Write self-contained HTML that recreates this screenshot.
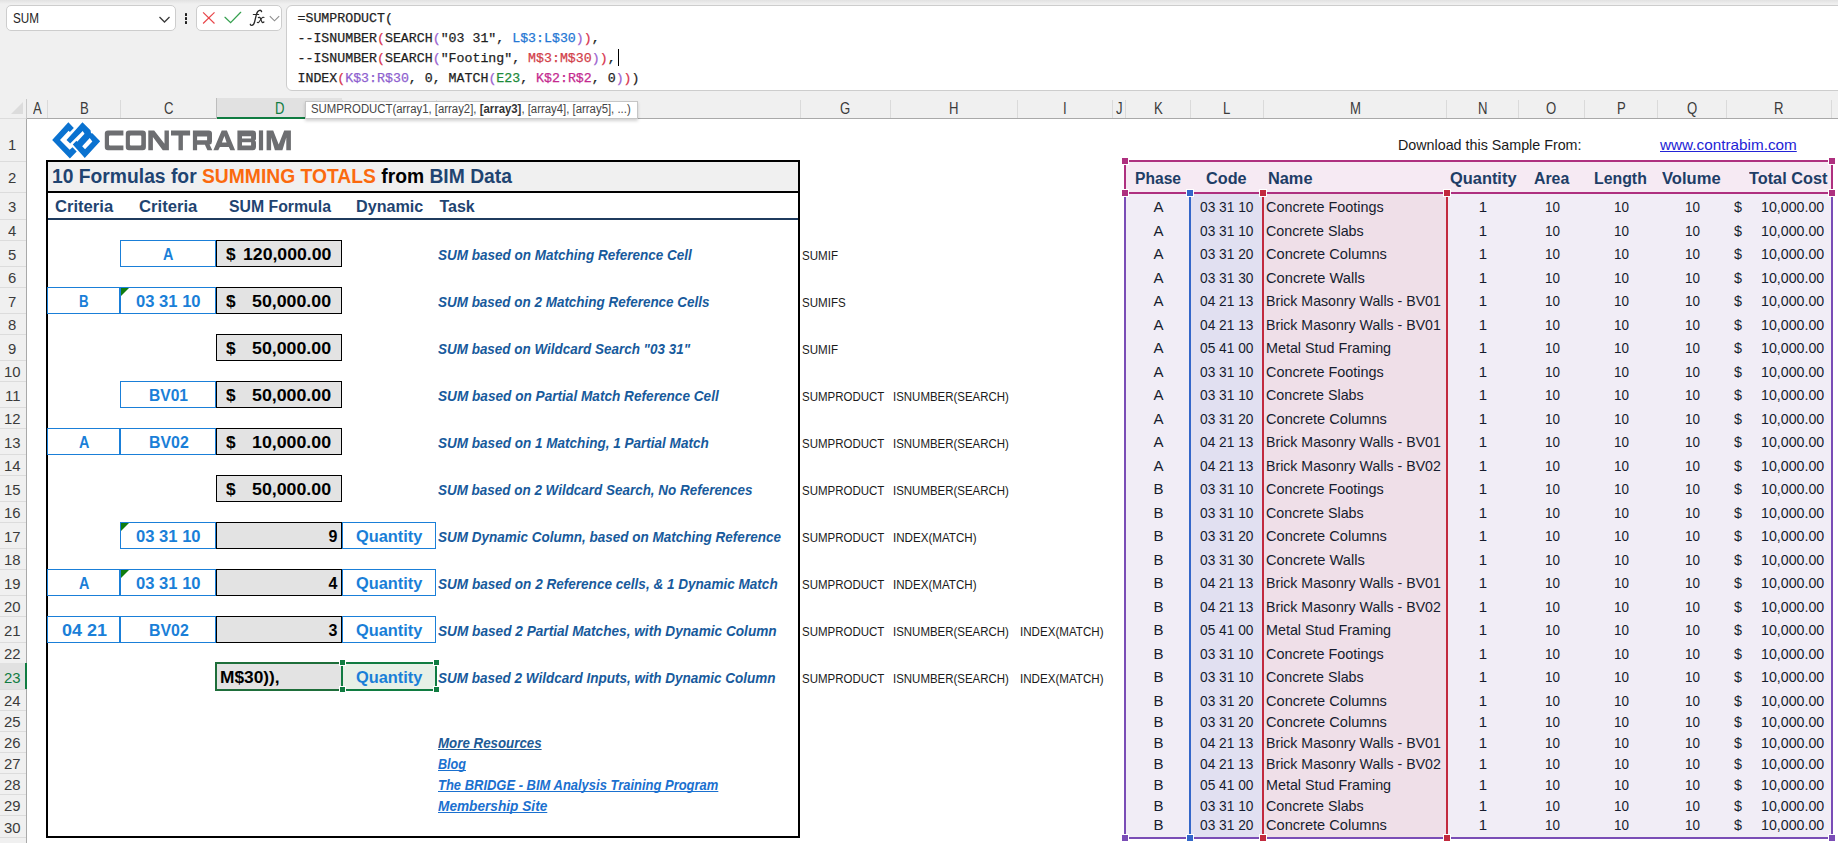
<!DOCTYPE html>
<html><head><meta charset="utf-8"><style>
html,body{margin:0;padding:0}
body{width:1838px;height:843px;overflow:hidden;position:relative;background:#fff;font-family:"Liberation Sans",sans-serif}
.t{position:absolute;white-space:nowrap;line-height:0}
</style></head><body>
<div style="position:absolute;left:0px;top:0px;width:1838px;height:96px;background:#f0f0f0"></div>
<div style="position:absolute;left:0px;top:0px;width:1838px;height:4px;background:linear-gradient(#e2e2e2,#f0f0f0)"></div>
<div style="position:absolute;left:6px;top:5px;width:170px;height:26px;box-sizing:border-box;background:#fff;border:1px solid #cdcdcd;border-radius:5px"></div>
<div class="t" style="left:13.00px;top:10.00px;font:normal normal 14px 'Liberation Sans', sans-serif;color:#1f1f1f;transform:scale(0.8360,1.0000);transform-origin:0 0;">SUM</div>
<svg style="position:absolute;left:158px;top:15px" width="13" height="9" viewBox="0 0 13 9"><path d="M1.5 2 L6.5 7 L11.5 2" fill="none" stroke="#3a3a3a" stroke-width="1.3"/></svg>
<div style="position:absolute;left:184.8px;top:13.3px;width:2.6px;height:2.6px;background:#1f1f1f;border-radius:0.6px"></div>
<div style="position:absolute;left:184.8px;top:17.3px;width:2.6px;height:2.6px;background:#1f1f1f;border-radius:0.6px"></div>
<div style="position:absolute;left:184.8px;top:21.3px;width:2.6px;height:2.6px;background:#1f1f1f;border-radius:0.6px"></div>
<div style="position:absolute;left:196px;top:5px;width:86px;height:26px;box-sizing:border-box;background:#fff;border:1px solid #cdcdcd;border-radius:5px"></div>
<svg style="position:absolute;left:200px;top:9px" width="20" height="18" viewBox="0 0 20 18"><path d="M3.1 3.4 L14.5 14.5 M14.5 3.4 L3.1 14.5" stroke="#e8464a" stroke-width="1.2" fill="none"/></svg>
<svg style="position:absolute;left:222px;top:9px" width="22" height="18" viewBox="0 0 22 18"><path d="M3 8.3 L8.6 13.6 L18.7 3.3" stroke="#36a04f" stroke-width="1.25" fill="none" stroke-linecap="round"/></svg>
<svg style="position:absolute;left:240px;top:5px" width="45" height="25" viewBox="240 5 45 25"><g fill="none" stroke="#2a2a2a" stroke-linecap="round">
<path d="M261.6,11.6 Q261.2,10.1 259.6,10.3 Q257.5,10.6 256.5,14.2 L254.6,21.8 Q253.8,25.2 251.6,25.4 Q250.2,25.4 250.4,24.3" stroke-width="1.35"/>
<path d="M253.3,14.5 L258.7,14.5" stroke-width="1.1"/>
<path d="M258.4,17.6 Q259.7,16.7 260.5,18.6 L261.7,21.6 Q262.5,23.4 263.9,22" stroke-width="1.2"/>
<path d="M264,17.5 Q263,16.6 261.6,18.3 L259.2,21.7 Q258.2,23.2 257.3,22.4" stroke-width="1.1"/>
</g><path d="M269.8,16.2 L274.5,20.8 L279.2,16.2" fill="none" stroke="#8c8c8c" stroke-width="1.1"/></svg>
<div style="position:absolute;left:286px;top:5px;width:1600px;height:86px;box-sizing:border-box;background:#fff;border:1px solid #cdcdcd;border-radius:6px"></div>
<div class="t" style="left:297.5px;top:11.00px;font:normal normal 13.25px 'Liberation Mono',monospace;color:#1f1f1f;-webkit-text-stroke:0.25px currentColor"><span style="color:#1f1f1f">=SUMPRODUCT</span><span style="color:#1f1f1f">(</span></div>
<div class="t" style="left:297.5px;top:31.00px;font:normal normal 13.25px 'Liberation Mono',monospace;color:#1f1f1f;-webkit-text-stroke:0.25px currentColor"><span style="color:#1f1f1f">--ISNUMBER</span><span style="color:#d8344f">(</span><span style="color:#1f1f1f">SEARCH</span><span style="color:#9b62cf">(</span><span style="color:#1f1f1f">&quot;03 31&quot;, </span><span style="color:#2577d4">L$3:L$30</span><span style="color:#9b62cf">)</span><span style="color:#d8344f">)</span><span style="color:#1f1f1f">,</span></div>
<div class="t" style="left:297.5px;top:51.00px;font:normal normal 13.25px 'Liberation Mono',monospace;color:#1f1f1f;-webkit-text-stroke:0.25px currentColor"><span style="color:#1f1f1f">--ISNUMBER</span><span style="color:#d8344f">(</span><span style="color:#1f1f1f">SEARCH</span><span style="color:#9b62cf">(</span><span style="color:#1f1f1f">&quot;Footing&quot;, </span><span style="color:#d2414a">M$3:M$30</span><span style="color:#9b62cf">)</span><span style="color:#d8344f">)</span><span style="color:#1f1f1f">,</span></div>
<div class="t" style="left:297.5px;top:71.00px;font:normal normal 13.25px 'Liberation Mono',monospace;color:#1f1f1f;-webkit-text-stroke:0.25px currentColor"><span style="color:#1f1f1f">INDEX</span><span style="color:#d8344f">(</span><span style="color:#8e5fcf">K$3:R$30</span><span style="color:#1f1f1f">, 0, </span><span style="color:#1f1f1f">MATCH</span><span style="color:#9b62cf">(</span><span style="color:#1d8a3a">E23</span><span style="color:#1f1f1f">, </span><span style="color:#c4298f">K$2:R$2</span><span style="color:#1f1f1f">, 0</span><span style="color:#9b62cf">)</span><span style="color:#d8344f">)</span><span style="color:#1f1f1f">)</span></div>
<div style="position:absolute;left:618px;top:49px;width:1px;height:17px;background:#000"></div>
<div style="position:absolute;left:0px;top:96px;width:1838px;height:23px;background:#f0f0f0"></div>
<div style="position:absolute;left:26px;top:118px;width:1812px;height:1px;background:#a9a9a9"></div>
<div style="position:absolute;left:0px;top:118px;width:26px;height:1px;background:#dcdcdc"></div>
<svg style="position:absolute;left:10px;top:101px" width="14" height="14" viewBox="0 0 14 14"><path d="M13 1 L13 13 L1 13 Z" fill="#dcdcdc"/></svg>
<div style="position:absolute;left:26px;top:99px;width:1px;height:20px;background:#c8c8c8"></div>
<div style="position:absolute;left:47px;top:100px;width:1px;height:18px;background:#dadada"></div>
<div style="position:absolute;left:120px;top:100px;width:1px;height:18px;background:#dadada"></div>
<div style="position:absolute;left:216px;top:100px;width:1px;height:18px;background:#dadada"></div>
<div style="position:absolute;left:216px;top:98px;width:126px;height:21px;background:#e1e1e1"></div>
<div style="position:absolute;left:216px;top:117px;width:126px;height:2px;background:#107c41"></div>
<div style="position:absolute;left:342px;top:100px;width:1px;height:18px;background:#dadada"></div>
<div style="position:absolute;left:436px;top:100px;width:1px;height:18px;background:#dadada"></div>
<div style="position:absolute;left:800px;top:100px;width:1px;height:18px;background:#dadada"></div>
<div style="position:absolute;left:890px;top:100px;width:1px;height:18px;background:#dadada"></div>
<div style="position:absolute;left:1017px;top:100px;width:1px;height:18px;background:#dadada"></div>
<div style="position:absolute;left:1112px;top:100px;width:1px;height:18px;background:#dadada"></div>
<div style="position:absolute;left:1125px;top:100px;width:1px;height:18px;background:#dadada"></div>
<div style="position:absolute;left:1190px;top:100px;width:1px;height:18px;background:#dadada"></div>
<div style="position:absolute;left:1263px;top:100px;width:1px;height:18px;background:#dadada"></div>
<div style="position:absolute;left:1446px;top:100px;width:1px;height:18px;background:#dadada"></div>
<div style="position:absolute;left:1518px;top:100px;width:1px;height:18px;background:#dadada"></div>
<div style="position:absolute;left:1584px;top:100px;width:1px;height:18px;background:#dadada"></div>
<div style="position:absolute;left:1657px;top:100px;width:1px;height:18px;background:#dadada"></div>
<div style="position:absolute;left:1726px;top:100px;width:1px;height:18px;background:#dadada"></div>
<div style="position:absolute;left:1831px;top:100px;width:1px;height:18px;background:#dadada"></div>
<div style="position:absolute;left:1900px;top:100px;width:1px;height:18px;background:#dadada"></div>
<div class="t" style="left:32.63px;top:100.00px;font:normal normal 16px 'Liberation Sans', sans-serif;color:#3b3b3b;transform:scale(0.8200,1.0000);transform-origin:0 0;">A</div>
<div class="t" style="left:79.63px;top:100.00px;font:normal normal 16px 'Liberation Sans', sans-serif;color:#3b3b3b;transform:scale(0.8200,1.0000);transform-origin:0 0;">B</div>
<div class="t" style="left:163.76px;top:100.00px;font:normal normal 16px 'Liberation Sans', sans-serif;color:#3b3b3b;transform:scale(0.8200,1.0000);transform-origin:0 0;">C</div>
<div class="t" style="left:274.76px;top:100.00px;font:normal normal 16px 'Liberation Sans', sans-serif;color:#107c41;transform:scale(0.8200,1.0000);transform-origin:0 0;">D</div>
<div class="t" style="left:385.13px;top:100.00px;font:normal normal 16px 'Liberation Sans', sans-serif;color:#3b3b3b;transform:scale(0.8200,1.0000);transform-origin:0 0;">E</div>
<div class="t" style="left:614.50px;top:100.00px;font:normal normal 16px 'Liberation Sans', sans-serif;color:#3b3b3b;transform:scale(0.8200,1.0000);transform-origin:0 0;">F</div>
<div class="t" style="left:840.40px;top:100.00px;font:normal normal 16px 'Liberation Sans', sans-serif;color:#3b3b3b;transform:scale(0.8200,1.0000);transform-origin:0 0;">G</div>
<div class="t" style="left:949.26px;top:100.00px;font:normal normal 16px 'Liberation Sans', sans-serif;color:#3b3b3b;transform:scale(0.8200,1.0000);transform-origin:0 0;">H</div>
<div class="t" style="left:1063.18px;top:100.00px;font:normal normal 16px 'Liberation Sans', sans-serif;color:#3b3b3b;transform:scale(0.8200,1.0000);transform-origin:0 0;">I</div>
<div class="t" style="left:1115.72px;top:100.00px;font:normal normal 16px 'Liberation Sans', sans-serif;color:#3b3b3b;transform:scale(0.8200,1.0000);transform-origin:0 0;">J</div>
<div class="t" style="left:1153.63px;top:100.00px;font:normal normal 16px 'Liberation Sans', sans-serif;color:#3b3b3b;transform:scale(0.8200,1.0000);transform-origin:0 0;">K</div>
<div class="t" style="left:1223.35px;top:100.00px;font:normal normal 16px 'Liberation Sans', sans-serif;color:#3b3b3b;transform:scale(0.8200,1.0000);transform-origin:0 0;">L</div>
<div class="t" style="left:1349.53px;top:100.00px;font:normal normal 16px 'Liberation Sans', sans-serif;color:#3b3b3b;transform:scale(0.8200,1.0000);transform-origin:0 0;">M</div>
<div class="t" style="left:1477.76px;top:100.00px;font:normal normal 16px 'Liberation Sans', sans-serif;color:#3b3b3b;transform:scale(0.8200,1.0000);transform-origin:0 0;">N</div>
<div class="t" style="left:1546.40px;top:100.00px;font:normal normal 16px 'Liberation Sans', sans-serif;color:#3b3b3b;transform:scale(0.8200,1.0000);transform-origin:0 0;">O</div>
<div class="t" style="left:1616.63px;top:100.00px;font:normal normal 16px 'Liberation Sans', sans-serif;color:#3b3b3b;transform:scale(0.8200,1.0000);transform-origin:0 0;">P</div>
<div class="t" style="left:1686.90px;top:100.00px;font:normal normal 16px 'Liberation Sans', sans-serif;color:#3b3b3b;transform:scale(0.8200,1.0000);transform-origin:0 0;">Q</div>
<div class="t" style="left:1774.26px;top:100.00px;font:normal normal 16px 'Liberation Sans', sans-serif;color:#3b3b3b;transform:scale(0.8200,1.0000);transform-origin:0 0;">R</div>
<div style="position:absolute;left:216px;top:98px;width:1px;height:21px;background:#bdbdbd"></div>
<div style="position:absolute;left:0px;top:119px;width:26px;height:724px;background:#f0f0f0"></div>
<div style="position:absolute;left:26px;top:119px;width:1px;height:724px;background:#a9a9a9"></div>
<div style="position:absolute;left:0px;top:161px;width:26px;height:1px;background:#dcdcdc"></div>
<div style="position:absolute;left:0px;top:192px;width:26px;height:1px;background:#dcdcdc"></div>
<div style="position:absolute;left:0px;top:219px;width:26px;height:1px;background:#dcdcdc"></div>
<div style="position:absolute;left:0px;top:240px;width:26px;height:1px;background:#dcdcdc"></div>
<div style="position:absolute;left:0px;top:266px;width:26px;height:1px;background:#dcdcdc"></div>
<div style="position:absolute;left:0px;top:287px;width:26px;height:1px;background:#dcdcdc"></div>
<div style="position:absolute;left:0px;top:313px;width:26px;height:1px;background:#dcdcdc"></div>
<div style="position:absolute;left:0px;top:334px;width:26px;height:1px;background:#dcdcdc"></div>
<div style="position:absolute;left:0px;top:360px;width:26px;height:1px;background:#dcdcdc"></div>
<div style="position:absolute;left:0px;top:381px;width:26px;height:1px;background:#dcdcdc"></div>
<div style="position:absolute;left:0px;top:407px;width:26px;height:1px;background:#dcdcdc"></div>
<div style="position:absolute;left:0px;top:428px;width:26px;height:1px;background:#dcdcdc"></div>
<div style="position:absolute;left:0px;top:454px;width:26px;height:1px;background:#dcdcdc"></div>
<div style="position:absolute;left:0px;top:475px;width:26px;height:1px;background:#dcdcdc"></div>
<div style="position:absolute;left:0px;top:501px;width:26px;height:1px;background:#dcdcdc"></div>
<div style="position:absolute;left:0px;top:522px;width:26px;height:1px;background:#dcdcdc"></div>
<div style="position:absolute;left:0px;top:548px;width:26px;height:1px;background:#dcdcdc"></div>
<div style="position:absolute;left:0px;top:569px;width:26px;height:1px;background:#dcdcdc"></div>
<div style="position:absolute;left:0px;top:595px;width:26px;height:1px;background:#dcdcdc"></div>
<div style="position:absolute;left:0px;top:616px;width:26px;height:1px;background:#dcdcdc"></div>
<div style="position:absolute;left:0px;top:642px;width:26px;height:1px;background:#dcdcdc"></div>
<div style="position:absolute;left:0px;top:663px;width:26px;height:1px;background:#dcdcdc"></div>
<div style="position:absolute;left:0px;top:689px;width:26px;height:1px;background:#dcdcdc"></div>
<div style="position:absolute;left:0px;top:710px;width:26px;height:1px;background:#dcdcdc"></div>
<div style="position:absolute;left:0px;top:731px;width:26px;height:1px;background:#dcdcdc"></div>
<div style="position:absolute;left:0px;top:752px;width:26px;height:1px;background:#dcdcdc"></div>
<div style="position:absolute;left:0px;top:773px;width:26px;height:1px;background:#dcdcdc"></div>
<div style="position:absolute;left:0px;top:794px;width:26px;height:1px;background:#dcdcdc"></div>
<div style="position:absolute;left:0px;top:815px;width:26px;height:1px;background:#dcdcdc"></div>
<div style="position:absolute;left:0px;top:837px;width:26px;height:1px;background:#dcdcdc"></div>
<div style="position:absolute;left:0px;top:860px;width:26px;height:1px;background:#dcdcdc"></div>
<div style="position:absolute;left:0px;top:663px;width:26px;height:26px;background:#e1e1e1"></div>
<div style="position:absolute;left:25px;top:663px;width:2px;height:26px;background:#107c41"></div>
<div class="t" style="left:8.16px;top:137.00px;font:normal normal 16px 'Liberation Sans', sans-serif;color:#3b3b3b;transform:scale(0.9300,0.9200);transform-origin:0 0;">1</div>
<div class="t" style="left:8.16px;top:170.00px;font:normal normal 16px 'Liberation Sans', sans-serif;color:#3b3b3b;transform:scale(0.9300,0.9200);transform-origin:0 0;">2</div>
<div class="t" style="left:8.16px;top:199.00px;font:normal normal 16px 'Liberation Sans', sans-serif;color:#3b3b3b;transform:scale(0.9300,0.9200);transform-origin:0 0;">3</div>
<div class="t" style="left:8.16px;top:223.00px;font:normal normal 16px 'Liberation Sans', sans-serif;color:#3b3b3b;transform:scale(0.9300,0.9200);transform-origin:0 0;">4</div>
<div class="t" style="left:8.16px;top:247.00px;font:normal normal 16px 'Liberation Sans', sans-serif;color:#3b3b3b;transform:scale(0.9300,0.9200);transform-origin:0 0;">5</div>
<div class="t" style="left:8.16px;top:270.00px;font:normal normal 16px 'Liberation Sans', sans-serif;color:#3b3b3b;transform:scale(0.9300,0.9200);transform-origin:0 0;">6</div>
<div class="t" style="left:8.16px;top:294.00px;font:normal normal 16px 'Liberation Sans', sans-serif;color:#3b3b3b;transform:scale(0.9300,0.9200);transform-origin:0 0;">7</div>
<div class="t" style="left:8.16px;top:317.00px;font:normal normal 16px 'Liberation Sans', sans-serif;color:#3b3b3b;transform:scale(0.9300,0.9200);transform-origin:0 0;">8</div>
<div class="t" style="left:8.16px;top:341.00px;font:normal normal 16px 'Liberation Sans', sans-serif;color:#3b3b3b;transform:scale(0.9300,0.9200);transform-origin:0 0;">9</div>
<div class="t" style="left:4.02px;top:364.00px;font:normal normal 16px 'Liberation Sans', sans-serif;color:#3b3b3b;transform:scale(0.9300,0.9200);transform-origin:0 0;">10</div>
<div class="t" style="left:4.58px;top:388.00px;font:normal normal 16px 'Liberation Sans', sans-serif;color:#3b3b3b;transform:scale(0.9300,0.9200);transform-origin:0 0;">11</div>
<div class="t" style="left:4.02px;top:411.00px;font:normal normal 16px 'Liberation Sans', sans-serif;color:#3b3b3b;transform:scale(0.9300,0.9200);transform-origin:0 0;">12</div>
<div class="t" style="left:4.02px;top:435.00px;font:normal normal 16px 'Liberation Sans', sans-serif;color:#3b3b3b;transform:scale(0.9300,0.9200);transform-origin:0 0;">13</div>
<div class="t" style="left:4.02px;top:458.00px;font:normal normal 16px 'Liberation Sans', sans-serif;color:#3b3b3b;transform:scale(0.9300,0.9200);transform-origin:0 0;">14</div>
<div class="t" style="left:4.02px;top:482.00px;font:normal normal 16px 'Liberation Sans', sans-serif;color:#3b3b3b;transform:scale(0.9300,0.9200);transform-origin:0 0;">15</div>
<div class="t" style="left:4.02px;top:505.00px;font:normal normal 16px 'Liberation Sans', sans-serif;color:#3b3b3b;transform:scale(0.9300,0.9200);transform-origin:0 0;">16</div>
<div class="t" style="left:4.02px;top:529.00px;font:normal normal 16px 'Liberation Sans', sans-serif;color:#3b3b3b;transform:scale(0.9300,0.9200);transform-origin:0 0;">17</div>
<div class="t" style="left:4.02px;top:552.00px;font:normal normal 16px 'Liberation Sans', sans-serif;color:#3b3b3b;transform:scale(0.9300,0.9200);transform-origin:0 0;">18</div>
<div class="t" style="left:4.02px;top:576.00px;font:normal normal 16px 'Liberation Sans', sans-serif;color:#3b3b3b;transform:scale(0.9300,0.9200);transform-origin:0 0;">19</div>
<div class="t" style="left:4.02px;top:599.00px;font:normal normal 16px 'Liberation Sans', sans-serif;color:#3b3b3b;transform:scale(0.9300,0.9200);transform-origin:0 0;">20</div>
<div class="t" style="left:4.02px;top:623.00px;font:normal normal 16px 'Liberation Sans', sans-serif;color:#3b3b3b;transform:scale(0.9300,0.9200);transform-origin:0 0;">21</div>
<div class="t" style="left:4.02px;top:646.00px;font:normal normal 16px 'Liberation Sans', sans-serif;color:#3b3b3b;transform:scale(0.9300,0.9200);transform-origin:0 0;">22</div>
<div class="t" style="left:4.02px;top:670.00px;font:normal normal 16px 'Liberation Sans', sans-serif;color:#107c41;transform:scale(0.9300,0.9200);transform-origin:0 0;">23</div>
<div class="t" style="left:4.02px;top:693.00px;font:normal normal 16px 'Liberation Sans', sans-serif;color:#3b3b3b;transform:scale(0.9300,0.9200);transform-origin:0 0;">24</div>
<div class="t" style="left:4.02px;top:714.00px;font:normal normal 16px 'Liberation Sans', sans-serif;color:#3b3b3b;transform:scale(0.9300,0.9200);transform-origin:0 0;">25</div>
<div class="t" style="left:4.02px;top:735.00px;font:normal normal 16px 'Liberation Sans', sans-serif;color:#3b3b3b;transform:scale(0.9300,0.9200);transform-origin:0 0;">26</div>
<div class="t" style="left:4.02px;top:756.00px;font:normal normal 16px 'Liberation Sans', sans-serif;color:#3b3b3b;transform:scale(0.9300,0.9200);transform-origin:0 0;">27</div>
<div class="t" style="left:4.02px;top:777.00px;font:normal normal 16px 'Liberation Sans', sans-serif;color:#3b3b3b;transform:scale(0.9300,0.9200);transform-origin:0 0;">28</div>
<div class="t" style="left:4.02px;top:798.00px;font:normal normal 16px 'Liberation Sans', sans-serif;color:#3b3b3b;transform:scale(0.9300,0.9200);transform-origin:0 0;">29</div>
<div class="t" style="left:4.02px;top:820.00px;font:normal normal 16px 'Liberation Sans', sans-serif;color:#3b3b3b;transform:scale(0.9300,0.9200);transform-origin:0 0;">30</div>
<div style="position:absolute;left:27px;top:119px;width:1811px;height:724px;background:#fff"></div>
<svg style="position:absolute;left:48px;top:118px" width="60" height="44" viewBox="0 0 1150 843"><g fill="#0a72d0">
<path d="M80,420 L390,80 L495,190 L420,268 L395,245 L230,420 L415,610 L470,560 L550,640 L420,775 Z"/>
<path fill-rule="evenodd" d="M660,80 L815,235 L825,290 L850,290 L1000,445 L705,765 L475,510 L545,435 L560,455 L700,300 L665,250 L425,490 L355,420 Z M800,385 L850,450 L710,600 L655,540 Z"/>
</g></svg>
<svg style="position:absolute;left:0;top:0" width="300" height="160" viewBox="0 0 300 160"><g fill="#6d6e71" fill-rule="evenodd">
<path d="M123.4,130.4 L108,130.4 Q104.8,130.4 104.8,133.6 L104.8,147.1 Q104.8,150.3 108,150.3 L123.4,150.3 L123.4,145.4 L110,145.4 Q109,145.4 109,144.4 L109,136.6 Q109,135.6 110,135.6 L123.4,135.6 Z"/>
<path d="M129,130.4 L142.7,130.4 Q145.9,130.4 145.9,133.6 L145.9,147.1 Q145.9,150.3 142.7,150.3 L129,150.3 Q125.8,150.3 125.8,147.1 L125.8,133.6 Q125.8,130.4 129,130.4 Z M130.9,135.6 L140.3,135.6 Q141.3,135.6 141.3,136.6 L141.3,144.4 Q141.3,145.4 140.3,145.4 L130.9,145.4 Q129.9,145.4 129.9,144.4 L129.9,136.6 Q129.9,135.6 130.9,135.6 Z"/>
<path d="M148.3,150.3 L148.3,130.4 L154.2,130.4 L164.5,143.8 L164.5,130.4 L168.9,130.4 L168.9,150.3 L162.8,150.3 L152.9,137.1 L152.9,150.3 Z"/>
<path d="M171,130.4 L190.1,130.4 L190.1,135.6 L182.9,135.6 L182.9,150.3 L178.5,150.3 L178.5,135.6 L171,135.6 Z"/>
<path d="M192.9,150.3 L192.9,130.4 L208.8,130.4 Q212,130.4 212,133.6 L212,141.4 Q212,144.2 209.6,144.6 L212.3,150.3 L207.4,150.3 L204.9,144.8 L197.1,144.8 L197.1,150.3 Z M197.1,136.4 L207.1,136.4 L207.1,140.2 L197.1,140.2 Z"/>
<path d="M213.4,150.3 L221.7,130.4 L226.9,130.4 L235.1,150.3 L230.3,150.3 L228.8,146.9 L219.9,146.9 L218.3,150.3 Z M224.4,136 L226.6,142.6 L221.9,142.6 Z"/>
<path d="M237.4,130.4 L252.8,130.4 Q256,130.4 256,133.6 L256,138.5 Q256,140.3 254.8,140.6 Q256,141 256,142.8 L256,147.1 Q256,150.3 252.8,150.3 L237.4,150.3 Z M242,136.2 L251.1,136.2 L251.1,138.4 L242,138.4 Z M242,142.3 L251.1,142.3 L251.1,145.6 L242,145.6 Z"/>
<path d="M258.9,130.4 L263.1,130.4 L263.1,150.3 L258.9,150.3 Z"/>
<path d="M266.6,150.3 L266.6,130.4 L273.2,130.4 L278.7,144.6 L284.2,130.4 L290.9,130.4 L290.9,150.3 L286.3,150.3 L286.3,137.4 L282.4,150.3 L274.9,150.3 L271.1,137.4 L271.1,150.3 Z"/>
</g></svg>
<div style="position:absolute;left:46px;top:160px;width:754px;height:678px;box-sizing:border-box;border:2px solid #000"></div>
<div style="position:absolute;left:48px;top:162px;width:750px;height:29px;background:#f0f0f0"></div>
<div style="position:absolute;left:48px;top:191px;width:750px;height:2px;background:#000"></div>
<div style="position:absolute;left:48px;top:218px;width:750px;height:2px;background:#1f3b5e"></div>
<div class="t" style="left:52.00px;top:165.00px;font:normal bold 20px 'Liberation Sans', sans-serif;color:#1f4471;transform:scale(0.9640,1.0000);transform-origin:0 0;"><span style="color:#1f4471">10 Formulas for </span><span style="color:#fb6a0e">SUMMING TOTALS</span><span style="color:#000"> from </span><span style="color:#1f4471">BIM Data</span></div>
<div class="t" style="left:55.30px;top:198.00px;font:normal bold 16px 'Liberation Sans', sans-serif;color:#1f4471;transform:scale(1.0383,1.0000);transform-origin:0 0;">Criteria</div>
<div class="t" style="left:139.40px;top:198.00px;font:normal bold 16px 'Liberation Sans', sans-serif;color:#1f4471;transform:scale(1.0419,1.0000);transform-origin:0 0;">Criteria</div>
<div class="t" style="left:228.60px;top:198.00px;font:normal bold 16px 'Liberation Sans', sans-serif;color:#1f4471;transform:scale(0.9884,1.0000);transform-origin:0 0;">SUM Formula</div>
<div class="t" style="left:355.70px;top:198.00px;font:normal bold 16px 'Liberation Sans', sans-serif;color:#1f4471;transform:scale(1.0090,1.0000);transform-origin:0 0;">Dynamic</div>
<div class="t" style="left:439.40px;top:198.00px;font:normal bold 16px 'Liberation Sans', sans-serif;color:#1f4471;">Task</div>
<div style="position:absolute;left:120px;top:240px;width:96px;height:27px;box-sizing:border-box;border:1px solid #1a7fd8"></div>
<div style="position:absolute;left:216px;top:240px;width:126px;height:27px;box-sizing:border-box;background:#e3e3e3;border:1px solid #000"></div>
<div class="t" style="left:163.30px;top:246.00px;font:normal bold 16px 'Liberation Sans', sans-serif;color:#1a7fd8;transform:scale(0.9004,1.0000);transform-origin:0 0;">A</div>
<div class="t" style="left:226.40px;top:246.00px;font:normal bold 16px 'Liberation Sans', sans-serif;color:#000;transform:scale(1.0787,1.0000);transform-origin:0 0;">$</div>
<div class="t" style="left:243.00px;top:246.00px;font:normal bold 16px 'Liberation Sans', sans-serif;color:#000;transform:scale(1.1036,1.0000);transform-origin:0 0;">120,000.00</div>
<div class="t" style="left:438.30px;top:247.00px;font:italic bold 16px 'Liberation Sans', sans-serif;color:#175a9c;transform:scale(0.8444,0.9500);transform-origin:0 0;">SUM based on Matching Reference Cell</div>
<div class="t" style="left:802.00px;top:249.00px;font:normal normal 12px 'Liberation Sans', sans-serif;color:#1a1a1a;transform:scale(0.9650,1.0000);transform-origin:0 0;">SUMIF</div>
<div style="position:absolute;left:47px;top:287px;width:73px;height:27px;box-sizing:border-box;border:1px solid #1a7fd8"></div>
<div style="position:absolute;left:120px;top:287px;width:96px;height:27px;box-sizing:border-box;border:1px solid #1a7fd8"></div>
<div style="position:absolute;left:216px;top:287px;width:126px;height:27px;box-sizing:border-box;background:#e3e3e3;border:1px solid #000"></div>
<svg style="position:absolute;left:121px;top:288px" width="9" height="9" viewBox="0 0 9 9"><path d="M0 0 L8 0 L0 8 Z" fill="#107c10"/></svg>
<div class="t" style="left:79.20px;top:293.00px;font:normal bold 16px 'Liberation Sans', sans-serif;color:#1a7fd8;transform:scale(0.8312,1.0000);transform-origin:0 0;">B</div>
<div class="t" style="left:136.20px;top:293.00px;font:normal bold 16px 'Liberation Sans', sans-serif;color:#1a7fd8;transform:scale(1.0369,1.0000);transform-origin:0 0;">03 31 10</div>
<div class="t" style="left:226.40px;top:293.00px;font:normal bold 16px 'Liberation Sans', sans-serif;color:#000;transform:scale(1.0787,1.0000);transform-origin:0 0;">$</div>
<div class="t" style="left:252.30px;top:293.00px;font:normal bold 16px 'Liberation Sans', sans-serif;color:#000;transform:scale(1.1110,1.0000);transform-origin:0 0;">50,000.00</div>
<div class="t" style="left:438.30px;top:294.00px;font:italic bold 16px 'Liberation Sans', sans-serif;color:#175a9c;transform:scale(0.8412,0.9500);transform-origin:0 0;">SUM based on 2 Matching Reference Cells</div>
<div class="t" style="left:802.00px;top:296.00px;font:normal normal 12px 'Liberation Sans', sans-serif;color:#1a1a1a;transform:scale(0.9650,1.0000);transform-origin:0 0;">SUMIFS</div>
<div style="position:absolute;left:216px;top:334px;width:126px;height:27px;box-sizing:border-box;background:#e3e3e3;border:1px solid #000"></div>
<div class="t" style="left:226.40px;top:340.00px;font:normal bold 16px 'Liberation Sans', sans-serif;color:#000;transform:scale(1.0787,1.0000);transform-origin:0 0;">$</div>
<div class="t" style="left:252.30px;top:340.00px;font:normal bold 16px 'Liberation Sans', sans-serif;color:#000;transform:scale(1.1110,1.0000);transform-origin:0 0;">50,000.00</div>
<div class="t" style="left:438.30px;top:341.00px;font:italic bold 16px 'Liberation Sans', sans-serif;color:#175a9c;transform:scale(0.8414,0.9500);transform-origin:0 0;">SUM based on Wildcard Search &quot;03 31&quot;</div>
<div class="t" style="left:802.00px;top:343.00px;font:normal normal 12px 'Liberation Sans', sans-serif;color:#1a1a1a;transform:scale(0.9650,1.0000);transform-origin:0 0;">SUMIF</div>
<div style="position:absolute;left:120px;top:381px;width:96px;height:27px;box-sizing:border-box;border:1px solid #1a7fd8"></div>
<div style="position:absolute;left:216px;top:381px;width:126px;height:27px;box-sizing:border-box;background:#e3e3e3;border:1px solid #000"></div>
<div class="t" style="left:149.00px;top:387.00px;font:normal bold 16px 'Liberation Sans', sans-serif;color:#1a7fd8;transform:scale(0.9750,1.0000);transform-origin:0 0;">BV01</div>
<div class="t" style="left:226.40px;top:387.00px;font:normal bold 16px 'Liberation Sans', sans-serif;color:#000;transform:scale(1.0787,1.0000);transform-origin:0 0;">$</div>
<div class="t" style="left:252.30px;top:387.00px;font:normal bold 16px 'Liberation Sans', sans-serif;color:#000;transform:scale(1.1110,1.0000);transform-origin:0 0;">50,000.00</div>
<div class="t" style="left:438.30px;top:388.00px;font:italic bold 16px 'Liberation Sans', sans-serif;color:#175a9c;transform:scale(0.8510,0.9500);transform-origin:0 0;">SUM based on Partial Match Reference Cell</div>
<div class="t" style="left:802.00px;top:390.00px;font:normal normal 12px 'Liberation Sans', sans-serif;color:#1a1a1a;transform:scale(0.9581,1.0000);transform-origin:0 0;">SUMPRODUCT</div>
<div class="t" style="left:893.10px;top:390.00px;font:normal normal 12px 'Liberation Sans', sans-serif;color:#1a1a1a;transform:scale(0.9551,1.0000);transform-origin:0 0;">ISNUMBER(SEARCH)</div>
<div style="position:absolute;left:47px;top:428px;width:73px;height:27px;box-sizing:border-box;border:1px solid #1a7fd8"></div>
<div style="position:absolute;left:120px;top:428px;width:96px;height:27px;box-sizing:border-box;border:1px solid #1a7fd8"></div>
<div style="position:absolute;left:216px;top:428px;width:126px;height:27px;box-sizing:border-box;background:#e3e3e3;border:1px solid #000"></div>
<div class="t" style="left:78.80px;top:434.00px;font:normal bold 16px 'Liberation Sans', sans-serif;color:#1a7fd8;transform:scale(0.9004,1.0000);transform-origin:0 0;">A</div>
<div class="t" style="left:148.65px;top:434.00px;font:normal bold 16px 'Liberation Sans', sans-serif;color:#1a7fd8;transform:scale(0.9925,1.0000);transform-origin:0 0;">BV02</div>
<div class="t" style="left:226.40px;top:434.00px;font:normal bold 16px 'Liberation Sans', sans-serif;color:#000;transform:scale(1.0787,1.0000);transform-origin:0 0;">$</div>
<div class="t" style="left:252.30px;top:434.00px;font:normal bold 16px 'Liberation Sans', sans-serif;color:#000;transform:scale(1.1110,1.0000);transform-origin:0 0;">10,000.00</div>
<div class="t" style="left:438.30px;top:435.00px;font:italic bold 16px 'Liberation Sans', sans-serif;color:#175a9c;transform:scale(0.8458,0.9500);transform-origin:0 0;">SUM based on 1 Matching, 1 Partial Match</div>
<div class="t" style="left:802.00px;top:437.00px;font:normal normal 12px 'Liberation Sans', sans-serif;color:#1a1a1a;transform:scale(0.9581,1.0000);transform-origin:0 0;">SUMPRODUCT</div>
<div class="t" style="left:893.10px;top:437.00px;font:normal normal 12px 'Liberation Sans', sans-serif;color:#1a1a1a;transform:scale(0.9551,1.0000);transform-origin:0 0;">ISNUMBER(SEARCH)</div>
<div style="position:absolute;left:216px;top:475px;width:126px;height:27px;box-sizing:border-box;background:#e3e3e3;border:1px solid #000"></div>
<div class="t" style="left:226.40px;top:481.00px;font:normal bold 16px 'Liberation Sans', sans-serif;color:#000;transform:scale(1.0787,1.0000);transform-origin:0 0;">$</div>
<div class="t" style="left:252.30px;top:481.00px;font:normal bold 16px 'Liberation Sans', sans-serif;color:#000;transform:scale(1.1110,1.0000);transform-origin:0 0;">50,000.00</div>
<div class="t" style="left:438.30px;top:482.00px;font:italic bold 16px 'Liberation Sans', sans-serif;color:#175a9c;transform:scale(0.8405,0.9500);transform-origin:0 0;">SUM based on 2 Wildcard Search, No References</div>
<div class="t" style="left:802.00px;top:484.00px;font:normal normal 12px 'Liberation Sans', sans-serif;color:#1a1a1a;transform:scale(0.9581,1.0000);transform-origin:0 0;">SUMPRODUCT</div>
<div class="t" style="left:893.10px;top:484.00px;font:normal normal 12px 'Liberation Sans', sans-serif;color:#1a1a1a;transform:scale(0.9551,1.0000);transform-origin:0 0;">ISNUMBER(SEARCH)</div>
<div style="position:absolute;left:120px;top:522px;width:96px;height:27px;box-sizing:border-box;border:1px solid #1a7fd8"></div>
<div style="position:absolute;left:342px;top:522px;width:94px;height:27px;box-sizing:border-box;border:1px solid #1a7fd8"></div>
<div style="position:absolute;left:216px;top:522px;width:126px;height:27px;box-sizing:border-box;background:#e3e3e3;border:1px solid #000"></div>
<svg style="position:absolute;left:121px;top:523px" width="9" height="9" viewBox="0 0 9 9"><path d="M0 0 L8 0 L0 8 Z" fill="#107c10"/></svg>
<div class="t" style="left:136.20px;top:528.00px;font:normal bold 16px 'Liberation Sans', sans-serif;color:#1a7fd8;transform:scale(1.0369,1.0000);transform-origin:0 0;">03 31 10</div>
<div class="t" style="left:328.40px;top:528.00px;font:normal bold 16px 'Liberation Sans', sans-serif;color:#000;">9</div>
<div class="t" style="left:356.10px;top:528.00px;font:normal bold 16px 'Liberation Sans', sans-serif;color:#1a7fd8;transform:scale(1.0231,1.0000);transform-origin:0 0;">Quantity</div>
<div class="t" style="left:438.30px;top:529.00px;font:italic bold 16px 'Liberation Sans', sans-serif;color:#175a9c;transform:scale(0.8440,0.9500);transform-origin:0 0;">SUM Dynamic Column, based on Matching Reference</div>
<div class="t" style="left:802.00px;top:531.00px;font:normal normal 12px 'Liberation Sans', sans-serif;color:#1a1a1a;transform:scale(0.9581,1.0000);transform-origin:0 0;">SUMPRODUCT</div>
<div class="t" style="left:893.10px;top:531.00px;font:normal normal 12px 'Liberation Sans', sans-serif;color:#1a1a1a;transform:scale(0.9670,1.0000);transform-origin:0 0;">INDEX(MATCH)</div>
<div style="position:absolute;left:47px;top:569px;width:73px;height:27px;box-sizing:border-box;border:1px solid #1a7fd8"></div>
<div style="position:absolute;left:120px;top:569px;width:96px;height:27px;box-sizing:border-box;border:1px solid #1a7fd8"></div>
<div style="position:absolute;left:342px;top:569px;width:94px;height:27px;box-sizing:border-box;border:1px solid #1a7fd8"></div>
<div style="position:absolute;left:216px;top:569px;width:126px;height:27px;box-sizing:border-box;background:#e3e3e3;border:1px solid #000"></div>
<svg style="position:absolute;left:121px;top:570px" width="9" height="9" viewBox="0 0 9 9"><path d="M0 0 L8 0 L0 8 Z" fill="#107c10"/></svg>
<div class="t" style="left:78.80px;top:575.00px;font:normal bold 16px 'Liberation Sans', sans-serif;color:#1a7fd8;transform:scale(0.9004,1.0000);transform-origin:0 0;">A</div>
<div class="t" style="left:136.20px;top:575.00px;font:normal bold 16px 'Liberation Sans', sans-serif;color:#1a7fd8;transform:scale(1.0369,1.0000);transform-origin:0 0;">03 31 10</div>
<div class="t" style="left:328.40px;top:575.00px;font:normal bold 16px 'Liberation Sans', sans-serif;color:#000;">4</div>
<div class="t" style="left:356.10px;top:575.00px;font:normal bold 16px 'Liberation Sans', sans-serif;color:#1a7fd8;transform:scale(1.0231,1.0000);transform-origin:0 0;">Quantity</div>
<div class="t" style="left:438.30px;top:576.00px;font:italic bold 16px 'Liberation Sans', sans-serif;color:#175a9c;transform:scale(0.8470,0.9500);transform-origin:0 0;">SUM based on 2 Reference cells, &amp; 1 Dynamic Match</div>
<div class="t" style="left:802.00px;top:578.00px;font:normal normal 12px 'Liberation Sans', sans-serif;color:#1a1a1a;transform:scale(0.9581,1.0000);transform-origin:0 0;">SUMPRODUCT</div>
<div class="t" style="left:893.10px;top:578.00px;font:normal normal 12px 'Liberation Sans', sans-serif;color:#1a1a1a;transform:scale(0.9670,1.0000);transform-origin:0 0;">INDEX(MATCH)</div>
<div style="position:absolute;left:47px;top:616px;width:73px;height:27px;box-sizing:border-box;border:1px solid #1a7fd8"></div>
<div style="position:absolute;left:120px;top:616px;width:96px;height:27px;box-sizing:border-box;border:1px solid #1a7fd8"></div>
<div style="position:absolute;left:342px;top:616px;width:94px;height:27px;box-sizing:border-box;border:1px solid #1a7fd8"></div>
<div style="position:absolute;left:216px;top:616px;width:126px;height:27px;box-sizing:border-box;background:#e3e3e3;border:1px solid #000"></div>
<div class="t" style="left:61.50px;top:622.00px;font:normal bold 16px 'Liberation Sans', sans-serif;color:#1a7fd8;transform:scale(1.1236,1.0000);transform-origin:0 0;">04 21</div>
<div class="t" style="left:148.65px;top:622.00px;font:normal bold 16px 'Liberation Sans', sans-serif;color:#1a7fd8;transform:scale(0.9925,1.0000);transform-origin:0 0;">BV02</div>
<div class="t" style="left:328.40px;top:622.00px;font:normal bold 16px 'Liberation Sans', sans-serif;color:#000;">3</div>
<div class="t" style="left:356.10px;top:622.00px;font:normal bold 16px 'Liberation Sans', sans-serif;color:#1a7fd8;transform:scale(1.0231,1.0000);transform-origin:0 0;">Quantity</div>
<div class="t" style="left:438.30px;top:623.00px;font:italic bold 16px 'Liberation Sans', sans-serif;color:#175a9c;transform:scale(0.8522,0.9500);transform-origin:0 0;">SUM based 2 Partial Matches, with Dynamic Column</div>
<div class="t" style="left:802.00px;top:625.00px;font:normal normal 12px 'Liberation Sans', sans-serif;color:#1a1a1a;transform:scale(0.9581,1.0000);transform-origin:0 0;">SUMPRODUCT</div>
<div class="t" style="left:893.10px;top:625.00px;font:normal normal 12px 'Liberation Sans', sans-serif;color:#1a1a1a;transform:scale(0.9551,1.0000);transform-origin:0 0;">ISNUMBER(SEARCH)</div>
<div class="t" style="left:1020.30px;top:625.00px;font:normal normal 12px 'Liberation Sans', sans-serif;color:#1a1a1a;transform:scale(0.9659,1.0000);transform-origin:0 0;">INDEX(MATCH)</div>
<div class="t" style="left:356.10px;top:669.00px;font:normal bold 16px 'Liberation Sans', sans-serif;color:#1a7fd8;transform:scale(1.0231,1.0000);transform-origin:0 0;">Quantity</div>
<div class="t" style="left:438.30px;top:670.00px;font:italic bold 16px 'Liberation Sans', sans-serif;color:#175a9c;transform:scale(0.8442,0.9500);transform-origin:0 0;">SUM based 2 Wildcard Inputs, with Dynamic Column</div>
<div class="t" style="left:802.00px;top:672.00px;font:normal normal 12px 'Liberation Sans', sans-serif;color:#1a1a1a;transform:scale(0.9581,1.0000);transform-origin:0 0;">SUMPRODUCT</div>
<div class="t" style="left:893.10px;top:672.00px;font:normal normal 12px 'Liberation Sans', sans-serif;color:#1a1a1a;transform:scale(0.9551,1.0000);transform-origin:0 0;">ISNUMBER(SEARCH)</div>
<div class="t" style="left:1020.30px;top:672.00px;font:normal normal 12px 'Liberation Sans', sans-serif;color:#1a1a1a;transform:scale(0.9659,1.0000);transform-origin:0 0;">INDEX(MATCH)</div>
<div style="position:absolute;left:215px;top:662px;width:128px;height:29px;box-sizing:border-box;background:#e3e3e3;border:2px solid #1e6e3a"></div>
<div class="t" style="left:220.40px;top:669.00px;font:normal bold 16px 'Liberation Sans', sans-serif;color:#000;transform:scale(1.0807,1.0000);transform-origin:0 0;">M$30)),</div>
<div style="position:absolute;left:341px;top:662px;width:96px;height:29px;box-sizing:border-box;background:#e7f0e7;border:2px solid #107c41"></div>
<div style="position:absolute;left:339.5px;top:660px;width:5px;height:5px;background:#107c41;outline:1px solid #fff"></div>
<div style="position:absolute;left:433.5px;top:660px;width:5px;height:5px;background:#107c41;outline:1px solid #fff"></div>
<div style="position:absolute;left:339.5px;top:686.5px;width:5px;height:5px;background:#107c41;outline:1px solid #fff"></div>
<div style="position:absolute;left:433.5px;top:686.5px;width:5px;height:5px;background:#107c41;outline:1px solid #fff"></div>
<div class="t" style="left:356.10px;top:669.00px;font:normal bold 16px 'Liberation Sans', sans-serif;color:#1a7fd8;transform:scale(1.0231,1.0000);transform-origin:0 0;">Quantity</div>
<div class="t" style="left:438.30px;top:734.00px;font:italic bold 15px 'Liberation Sans', sans-serif;color:#1d5a96;transform:scale(0.8877,1.0000);transform-origin:0 0;text-decoration:underline;text-decoration-skip-ink:none;">More Resources</div>
<div class="t" style="left:438.30px;top:755.00px;font:italic bold 15px 'Liberation Sans', sans-serif;color:#1a70cf;transform:scale(0.8396,1.0000);transform-origin:0 0;text-decoration:underline;text-decoration-skip-ink:none;">Blog</div>
<div class="t" style="left:438.30px;top:776.00px;font:italic bold 15px 'Liberation Sans', sans-serif;color:#1a70cf;transform:scale(0.8646,1.0000);transform-origin:0 0;text-decoration:underline;text-decoration-skip-ink:none;">The BRIDGE - BIM Analysis Training Program</div>
<div class="t" style="left:438.30px;top:797.00px;font:italic bold 15px 'Liberation Sans', sans-serif;color:#1a70cf;transform:scale(0.9105,1.0000);transform-origin:0 0;text-decoration:underline;text-decoration-skip-ink:none;">Membership Site</div>
<div class="t" style="left:1398.00px;top:136.00px;font:normal normal 15px 'Liberation Sans', sans-serif;color:#1a1a1a;transform:scale(0.9528,1.0000);transform-origin:0 0;">Download this Sample From:</div>
<div class="t" style="left:1660.05px;top:136.00px;font:normal normal 15px 'Liberation Sans', sans-serif;color:#2323d6;transform:scale(1.0190,1.0000);transform-origin:0 0;text-decoration:underline;text-decoration-skip-ink:none;">www.contrabim.com</div>
<div style="position:absolute;left:1126px;top:162px;width:705px;height:30px;background:#f6eaf3"></div>
<div style="position:absolute;left:1126px;top:194px;width:705px;height:643px;background:#f1edf6"></div>
<div style="position:absolute;left:1191px;top:194px;width:72px;height:643px;background:#e1e0f1"></div>
<div style="position:absolute;left:1264px;top:194px;width:182px;height:643px;background:#efdfe8"></div>
<div class="t" style="left:1135.00px;top:170.00px;font:normal bold 16px 'Liberation Sans', sans-serif;color:#203d66;transform:scale(0.9756,1.0000);transform-origin:0 0;">Phase</div>
<div class="t" style="left:1206.40px;top:170.00px;font:normal bold 16px 'Liberation Sans', sans-serif;color:#203d66;transform:scale(1.0150,1.0000);transform-origin:0 0;">Code</div>
<div class="t" style="left:1267.70px;top:170.00px;font:normal bold 16px 'Liberation Sans', sans-serif;color:#203d66;transform:scale(1.0206,1.0000);transform-origin:0 0;">Name</div>
<div class="t" style="left:1449.70px;top:170.00px;font:normal bold 16px 'Liberation Sans', sans-serif;color:#203d66;transform:scale(1.0247,1.0000);transform-origin:0 0;">Quantity</div>
<div class="t" style="left:1534.20px;top:170.00px;font:normal bold 16px 'Liberation Sans', sans-serif;color:#203d66;transform:scale(0.9888,1.0000);transform-origin:0 0;">Area</div>
<div class="t" style="left:1594.40px;top:170.00px;font:normal bold 16px 'Liberation Sans', sans-serif;color:#203d66;transform:scale(0.9906,1.0000);transform-origin:0 0;">Length</div>
<div class="t" style="left:1662.40px;top:170.00px;font:normal bold 16px 'Liberation Sans', sans-serif;color:#203d66;transform:scale(1.0353,1.0000);transform-origin:0 0;">Volume</div>
<div class="t" style="left:1749.20px;top:170.00px;font:normal bold 16px 'Liberation Sans', sans-serif;color:#203d66;transform:scale(1.0175,1.0000);transform-origin:0 0;">Total Cost</div>
<div class="t" style="left:1153.40px;top:198.00px;font:normal normal 15px 'Liberation Sans', sans-serif;color:#161c2e;">A</div>
<div class="t" style="left:1200.25px;top:198.00px;font:normal normal 15px 'Liberation Sans', sans-serif;color:#161c2e;transform:scale(0.9161,1.0000);transform-origin:0 0;">03 31 10</div>
<div class="t" style="left:1266.20px;top:198.00px;font:normal normal 15px 'Liberation Sans', sans-serif;color:#161c2e;transform:scale(0.9596,1.0000);transform-origin:0 0;">Concrete Footings</div>
<div class="t" style="left:1478.83px;top:198.00px;font:normal normal 15px 'Liberation Sans', sans-serif;color:#161c2e;">1</div>
<div class="t" style="left:1544.70px;top:198.00px;font:normal normal 15px 'Liberation Sans', sans-serif;color:#161c2e;transform:scale(0.8982,1.0000);transform-origin:0 0;">10</div>
<div class="t" style="left:1613.90px;top:198.00px;font:normal normal 15px 'Liberation Sans', sans-serif;color:#161c2e;transform:scale(0.8982,1.0000);transform-origin:0 0;">10</div>
<div class="t" style="left:1684.50px;top:198.00px;font:normal normal 15px 'Liberation Sans', sans-serif;color:#161c2e;transform:scale(0.8982,1.0000);transform-origin:0 0;">10</div>
<div class="t" style="left:1734.00px;top:198.00px;font:normal normal 15px 'Liberation Sans', sans-serif;color:#161c2e;transform:scale(0.9581,1.0000);transform-origin:0 0;">$</div>
<div class="t" style="left:1760.50px;top:198.00px;font:normal normal 15px 'Liberation Sans', sans-serif;color:#161c2e;transform:scale(0.9468,1.0000);transform-origin:0 0;">10,000.00</div>
<div class="t" style="left:1153.40px;top:222.00px;font:normal normal 15px 'Liberation Sans', sans-serif;color:#161c2e;">A</div>
<div class="t" style="left:1200.25px;top:222.00px;font:normal normal 15px 'Liberation Sans', sans-serif;color:#161c2e;transform:scale(0.9161,1.0000);transform-origin:0 0;">03 31 10</div>
<div class="t" style="left:1266.20px;top:222.00px;font:normal normal 15px 'Liberation Sans', sans-serif;color:#161c2e;transform:scale(0.9527,1.0000);transform-origin:0 0;">Concrete Slabs</div>
<div class="t" style="left:1478.83px;top:222.00px;font:normal normal 15px 'Liberation Sans', sans-serif;color:#161c2e;">1</div>
<div class="t" style="left:1544.70px;top:222.00px;font:normal normal 15px 'Liberation Sans', sans-serif;color:#161c2e;transform:scale(0.8982,1.0000);transform-origin:0 0;">10</div>
<div class="t" style="left:1613.90px;top:222.00px;font:normal normal 15px 'Liberation Sans', sans-serif;color:#161c2e;transform:scale(0.8982,1.0000);transform-origin:0 0;">10</div>
<div class="t" style="left:1684.50px;top:222.00px;font:normal normal 15px 'Liberation Sans', sans-serif;color:#161c2e;transform:scale(0.8982,1.0000);transform-origin:0 0;">10</div>
<div class="t" style="left:1734.00px;top:222.00px;font:normal normal 15px 'Liberation Sans', sans-serif;color:#161c2e;transform:scale(0.9581,1.0000);transform-origin:0 0;">$</div>
<div class="t" style="left:1760.50px;top:222.00px;font:normal normal 15px 'Liberation Sans', sans-serif;color:#161c2e;transform:scale(0.9468,1.0000);transform-origin:0 0;">10,000.00</div>
<div class="t" style="left:1153.40px;top:245.00px;font:normal normal 15px 'Liberation Sans', sans-serif;color:#161c2e;">A</div>
<div class="t" style="left:1200.25px;top:245.00px;font:normal normal 15px 'Liberation Sans', sans-serif;color:#161c2e;transform:scale(0.9161,1.0000);transform-origin:0 0;">03 31 20</div>
<div class="t" style="left:1266.20px;top:245.00px;font:normal normal 15px 'Liberation Sans', sans-serif;color:#161c2e;transform:scale(0.9734,1.0000);transform-origin:0 0;">Concrete Columns</div>
<div class="t" style="left:1478.83px;top:245.00px;font:normal normal 15px 'Liberation Sans', sans-serif;color:#161c2e;">1</div>
<div class="t" style="left:1544.70px;top:245.00px;font:normal normal 15px 'Liberation Sans', sans-serif;color:#161c2e;transform:scale(0.8982,1.0000);transform-origin:0 0;">10</div>
<div class="t" style="left:1613.90px;top:245.00px;font:normal normal 15px 'Liberation Sans', sans-serif;color:#161c2e;transform:scale(0.8982,1.0000);transform-origin:0 0;">10</div>
<div class="t" style="left:1684.50px;top:245.00px;font:normal normal 15px 'Liberation Sans', sans-serif;color:#161c2e;transform:scale(0.8982,1.0000);transform-origin:0 0;">10</div>
<div class="t" style="left:1734.00px;top:245.00px;font:normal normal 15px 'Liberation Sans', sans-serif;color:#161c2e;transform:scale(0.9581,1.0000);transform-origin:0 0;">$</div>
<div class="t" style="left:1760.50px;top:245.00px;font:normal normal 15px 'Liberation Sans', sans-serif;color:#161c2e;transform:scale(0.9468,1.0000);transform-origin:0 0;">10,000.00</div>
<div class="t" style="left:1153.40px;top:269.00px;font:normal normal 15px 'Liberation Sans', sans-serif;color:#161c2e;">A</div>
<div class="t" style="left:1200.25px;top:269.00px;font:normal normal 15px 'Liberation Sans', sans-serif;color:#161c2e;transform:scale(0.9161,1.0000);transform-origin:0 0;">03 31 30</div>
<div class="t" style="left:1266.20px;top:269.00px;font:normal normal 15px 'Liberation Sans', sans-serif;color:#161c2e;transform:scale(0.9768,1.0000);transform-origin:0 0;">Concrete Walls</div>
<div class="t" style="left:1478.83px;top:269.00px;font:normal normal 15px 'Liberation Sans', sans-serif;color:#161c2e;">1</div>
<div class="t" style="left:1544.70px;top:269.00px;font:normal normal 15px 'Liberation Sans', sans-serif;color:#161c2e;transform:scale(0.8982,1.0000);transform-origin:0 0;">10</div>
<div class="t" style="left:1613.90px;top:269.00px;font:normal normal 15px 'Liberation Sans', sans-serif;color:#161c2e;transform:scale(0.8982,1.0000);transform-origin:0 0;">10</div>
<div class="t" style="left:1684.50px;top:269.00px;font:normal normal 15px 'Liberation Sans', sans-serif;color:#161c2e;transform:scale(0.8982,1.0000);transform-origin:0 0;">10</div>
<div class="t" style="left:1734.00px;top:269.00px;font:normal normal 15px 'Liberation Sans', sans-serif;color:#161c2e;transform:scale(0.9581,1.0000);transform-origin:0 0;">$</div>
<div class="t" style="left:1760.50px;top:269.00px;font:normal normal 15px 'Liberation Sans', sans-serif;color:#161c2e;transform:scale(0.9468,1.0000);transform-origin:0 0;">10,000.00</div>
<div class="t" style="left:1153.40px;top:292.00px;font:normal normal 15px 'Liberation Sans', sans-serif;color:#161c2e;">A</div>
<div class="t" style="left:1200.25px;top:292.00px;font:normal normal 15px 'Liberation Sans', sans-serif;color:#161c2e;transform:scale(0.9161,1.0000);transform-origin:0 0;">04 21 13</div>
<div class="t" style="left:1266.20px;top:292.00px;font:normal normal 15px 'Liberation Sans', sans-serif;color:#161c2e;transform:scale(0.9433,1.0000);transform-origin:0 0;">Brick Masonry Walls - BV01</div>
<div class="t" style="left:1478.83px;top:292.00px;font:normal normal 15px 'Liberation Sans', sans-serif;color:#161c2e;">1</div>
<div class="t" style="left:1544.70px;top:292.00px;font:normal normal 15px 'Liberation Sans', sans-serif;color:#161c2e;transform:scale(0.8982,1.0000);transform-origin:0 0;">10</div>
<div class="t" style="left:1613.90px;top:292.00px;font:normal normal 15px 'Liberation Sans', sans-serif;color:#161c2e;transform:scale(0.8982,1.0000);transform-origin:0 0;">10</div>
<div class="t" style="left:1684.50px;top:292.00px;font:normal normal 15px 'Liberation Sans', sans-serif;color:#161c2e;transform:scale(0.8982,1.0000);transform-origin:0 0;">10</div>
<div class="t" style="left:1734.00px;top:292.00px;font:normal normal 15px 'Liberation Sans', sans-serif;color:#161c2e;transform:scale(0.9581,1.0000);transform-origin:0 0;">$</div>
<div class="t" style="left:1760.50px;top:292.00px;font:normal normal 15px 'Liberation Sans', sans-serif;color:#161c2e;transform:scale(0.9468,1.0000);transform-origin:0 0;">10,000.00</div>
<div class="t" style="left:1153.40px;top:316.00px;font:normal normal 15px 'Liberation Sans', sans-serif;color:#161c2e;">A</div>
<div class="t" style="left:1200.25px;top:316.00px;font:normal normal 15px 'Liberation Sans', sans-serif;color:#161c2e;transform:scale(0.9161,1.0000);transform-origin:0 0;">04 21 13</div>
<div class="t" style="left:1266.20px;top:316.00px;font:normal normal 15px 'Liberation Sans', sans-serif;color:#161c2e;transform:scale(0.9433,1.0000);transform-origin:0 0;">Brick Masonry Walls - BV01</div>
<div class="t" style="left:1478.83px;top:316.00px;font:normal normal 15px 'Liberation Sans', sans-serif;color:#161c2e;">1</div>
<div class="t" style="left:1544.70px;top:316.00px;font:normal normal 15px 'Liberation Sans', sans-serif;color:#161c2e;transform:scale(0.8982,1.0000);transform-origin:0 0;">10</div>
<div class="t" style="left:1613.90px;top:316.00px;font:normal normal 15px 'Liberation Sans', sans-serif;color:#161c2e;transform:scale(0.8982,1.0000);transform-origin:0 0;">10</div>
<div class="t" style="left:1684.50px;top:316.00px;font:normal normal 15px 'Liberation Sans', sans-serif;color:#161c2e;transform:scale(0.8982,1.0000);transform-origin:0 0;">10</div>
<div class="t" style="left:1734.00px;top:316.00px;font:normal normal 15px 'Liberation Sans', sans-serif;color:#161c2e;transform:scale(0.9581,1.0000);transform-origin:0 0;">$</div>
<div class="t" style="left:1760.50px;top:316.00px;font:normal normal 15px 'Liberation Sans', sans-serif;color:#161c2e;transform:scale(0.9468,1.0000);transform-origin:0 0;">10,000.00</div>
<div class="t" style="left:1153.40px;top:339.00px;font:normal normal 15px 'Liberation Sans', sans-serif;color:#161c2e;">A</div>
<div class="t" style="left:1200.25px;top:339.00px;font:normal normal 15px 'Liberation Sans', sans-serif;color:#161c2e;transform:scale(0.9161,1.0000);transform-origin:0 0;">05 41 00</div>
<div class="t" style="left:1266.20px;top:339.00px;font:normal normal 15px 'Liberation Sans', sans-serif;color:#161c2e;transform:scale(0.9557,1.0000);transform-origin:0 0;">Metal Stud Framing</div>
<div class="t" style="left:1478.83px;top:339.00px;font:normal normal 15px 'Liberation Sans', sans-serif;color:#161c2e;">1</div>
<div class="t" style="left:1544.70px;top:339.00px;font:normal normal 15px 'Liberation Sans', sans-serif;color:#161c2e;transform:scale(0.8982,1.0000);transform-origin:0 0;">10</div>
<div class="t" style="left:1613.90px;top:339.00px;font:normal normal 15px 'Liberation Sans', sans-serif;color:#161c2e;transform:scale(0.8982,1.0000);transform-origin:0 0;">10</div>
<div class="t" style="left:1684.50px;top:339.00px;font:normal normal 15px 'Liberation Sans', sans-serif;color:#161c2e;transform:scale(0.8982,1.0000);transform-origin:0 0;">10</div>
<div class="t" style="left:1734.00px;top:339.00px;font:normal normal 15px 'Liberation Sans', sans-serif;color:#161c2e;transform:scale(0.9581,1.0000);transform-origin:0 0;">$</div>
<div class="t" style="left:1760.50px;top:339.00px;font:normal normal 15px 'Liberation Sans', sans-serif;color:#161c2e;transform:scale(0.9468,1.0000);transform-origin:0 0;">10,000.00</div>
<div class="t" style="left:1153.40px;top:363.00px;font:normal normal 15px 'Liberation Sans', sans-serif;color:#161c2e;">A</div>
<div class="t" style="left:1200.25px;top:363.00px;font:normal normal 15px 'Liberation Sans', sans-serif;color:#161c2e;transform:scale(0.9161,1.0000);transform-origin:0 0;">03 31 10</div>
<div class="t" style="left:1266.20px;top:363.00px;font:normal normal 15px 'Liberation Sans', sans-serif;color:#161c2e;transform:scale(0.9596,1.0000);transform-origin:0 0;">Concrete Footings</div>
<div class="t" style="left:1478.83px;top:363.00px;font:normal normal 15px 'Liberation Sans', sans-serif;color:#161c2e;">1</div>
<div class="t" style="left:1544.70px;top:363.00px;font:normal normal 15px 'Liberation Sans', sans-serif;color:#161c2e;transform:scale(0.8982,1.0000);transform-origin:0 0;">10</div>
<div class="t" style="left:1613.90px;top:363.00px;font:normal normal 15px 'Liberation Sans', sans-serif;color:#161c2e;transform:scale(0.8982,1.0000);transform-origin:0 0;">10</div>
<div class="t" style="left:1684.50px;top:363.00px;font:normal normal 15px 'Liberation Sans', sans-serif;color:#161c2e;transform:scale(0.8982,1.0000);transform-origin:0 0;">10</div>
<div class="t" style="left:1734.00px;top:363.00px;font:normal normal 15px 'Liberation Sans', sans-serif;color:#161c2e;transform:scale(0.9581,1.0000);transform-origin:0 0;">$</div>
<div class="t" style="left:1760.50px;top:363.00px;font:normal normal 15px 'Liberation Sans', sans-serif;color:#161c2e;transform:scale(0.9468,1.0000);transform-origin:0 0;">10,000.00</div>
<div class="t" style="left:1153.40px;top:386.00px;font:normal normal 15px 'Liberation Sans', sans-serif;color:#161c2e;">A</div>
<div class="t" style="left:1200.25px;top:386.00px;font:normal normal 15px 'Liberation Sans', sans-serif;color:#161c2e;transform:scale(0.9161,1.0000);transform-origin:0 0;">03 31 10</div>
<div class="t" style="left:1266.20px;top:386.00px;font:normal normal 15px 'Liberation Sans', sans-serif;color:#161c2e;transform:scale(0.9527,1.0000);transform-origin:0 0;">Concrete Slabs</div>
<div class="t" style="left:1478.83px;top:386.00px;font:normal normal 15px 'Liberation Sans', sans-serif;color:#161c2e;">1</div>
<div class="t" style="left:1544.70px;top:386.00px;font:normal normal 15px 'Liberation Sans', sans-serif;color:#161c2e;transform:scale(0.8982,1.0000);transform-origin:0 0;">10</div>
<div class="t" style="left:1613.90px;top:386.00px;font:normal normal 15px 'Liberation Sans', sans-serif;color:#161c2e;transform:scale(0.8982,1.0000);transform-origin:0 0;">10</div>
<div class="t" style="left:1684.50px;top:386.00px;font:normal normal 15px 'Liberation Sans', sans-serif;color:#161c2e;transform:scale(0.8982,1.0000);transform-origin:0 0;">10</div>
<div class="t" style="left:1734.00px;top:386.00px;font:normal normal 15px 'Liberation Sans', sans-serif;color:#161c2e;transform:scale(0.9581,1.0000);transform-origin:0 0;">$</div>
<div class="t" style="left:1760.50px;top:386.00px;font:normal normal 15px 'Liberation Sans', sans-serif;color:#161c2e;transform:scale(0.9468,1.0000);transform-origin:0 0;">10,000.00</div>
<div class="t" style="left:1153.40px;top:410.00px;font:normal normal 15px 'Liberation Sans', sans-serif;color:#161c2e;">A</div>
<div class="t" style="left:1200.25px;top:410.00px;font:normal normal 15px 'Liberation Sans', sans-serif;color:#161c2e;transform:scale(0.9161,1.0000);transform-origin:0 0;">03 31 20</div>
<div class="t" style="left:1266.20px;top:410.00px;font:normal normal 15px 'Liberation Sans', sans-serif;color:#161c2e;transform:scale(0.9734,1.0000);transform-origin:0 0;">Concrete Columns</div>
<div class="t" style="left:1478.83px;top:410.00px;font:normal normal 15px 'Liberation Sans', sans-serif;color:#161c2e;">1</div>
<div class="t" style="left:1544.70px;top:410.00px;font:normal normal 15px 'Liberation Sans', sans-serif;color:#161c2e;transform:scale(0.8982,1.0000);transform-origin:0 0;">10</div>
<div class="t" style="left:1613.90px;top:410.00px;font:normal normal 15px 'Liberation Sans', sans-serif;color:#161c2e;transform:scale(0.8982,1.0000);transform-origin:0 0;">10</div>
<div class="t" style="left:1684.50px;top:410.00px;font:normal normal 15px 'Liberation Sans', sans-serif;color:#161c2e;transform:scale(0.8982,1.0000);transform-origin:0 0;">10</div>
<div class="t" style="left:1734.00px;top:410.00px;font:normal normal 15px 'Liberation Sans', sans-serif;color:#161c2e;transform:scale(0.9581,1.0000);transform-origin:0 0;">$</div>
<div class="t" style="left:1760.50px;top:410.00px;font:normal normal 15px 'Liberation Sans', sans-serif;color:#161c2e;transform:scale(0.9468,1.0000);transform-origin:0 0;">10,000.00</div>
<div class="t" style="left:1153.40px;top:433.00px;font:normal normal 15px 'Liberation Sans', sans-serif;color:#161c2e;">A</div>
<div class="t" style="left:1200.25px;top:433.00px;font:normal normal 15px 'Liberation Sans', sans-serif;color:#161c2e;transform:scale(0.9161,1.0000);transform-origin:0 0;">04 21 13</div>
<div class="t" style="left:1266.20px;top:433.00px;font:normal normal 15px 'Liberation Sans', sans-serif;color:#161c2e;transform:scale(0.9433,1.0000);transform-origin:0 0;">Brick Masonry Walls - BV01</div>
<div class="t" style="left:1478.83px;top:433.00px;font:normal normal 15px 'Liberation Sans', sans-serif;color:#161c2e;">1</div>
<div class="t" style="left:1544.70px;top:433.00px;font:normal normal 15px 'Liberation Sans', sans-serif;color:#161c2e;transform:scale(0.8982,1.0000);transform-origin:0 0;">10</div>
<div class="t" style="left:1613.90px;top:433.00px;font:normal normal 15px 'Liberation Sans', sans-serif;color:#161c2e;transform:scale(0.8982,1.0000);transform-origin:0 0;">10</div>
<div class="t" style="left:1684.50px;top:433.00px;font:normal normal 15px 'Liberation Sans', sans-serif;color:#161c2e;transform:scale(0.8982,1.0000);transform-origin:0 0;">10</div>
<div class="t" style="left:1734.00px;top:433.00px;font:normal normal 15px 'Liberation Sans', sans-serif;color:#161c2e;transform:scale(0.9581,1.0000);transform-origin:0 0;">$</div>
<div class="t" style="left:1760.50px;top:433.00px;font:normal normal 15px 'Liberation Sans', sans-serif;color:#161c2e;transform:scale(0.9468,1.0000);transform-origin:0 0;">10,000.00</div>
<div class="t" style="left:1153.40px;top:457.00px;font:normal normal 15px 'Liberation Sans', sans-serif;color:#161c2e;">A</div>
<div class="t" style="left:1200.25px;top:457.00px;font:normal normal 15px 'Liberation Sans', sans-serif;color:#161c2e;transform:scale(0.9161,1.0000);transform-origin:0 0;">04 21 13</div>
<div class="t" style="left:1266.20px;top:457.00px;font:normal normal 15px 'Liberation Sans', sans-serif;color:#161c2e;transform:scale(0.9433,1.0000);transform-origin:0 0;">Brick Masonry Walls - BV02</div>
<div class="t" style="left:1478.83px;top:457.00px;font:normal normal 15px 'Liberation Sans', sans-serif;color:#161c2e;">1</div>
<div class="t" style="left:1544.70px;top:457.00px;font:normal normal 15px 'Liberation Sans', sans-serif;color:#161c2e;transform:scale(0.8982,1.0000);transform-origin:0 0;">10</div>
<div class="t" style="left:1613.90px;top:457.00px;font:normal normal 15px 'Liberation Sans', sans-serif;color:#161c2e;transform:scale(0.8982,1.0000);transform-origin:0 0;">10</div>
<div class="t" style="left:1684.50px;top:457.00px;font:normal normal 15px 'Liberation Sans', sans-serif;color:#161c2e;transform:scale(0.8982,1.0000);transform-origin:0 0;">10</div>
<div class="t" style="left:1734.00px;top:457.00px;font:normal normal 15px 'Liberation Sans', sans-serif;color:#161c2e;transform:scale(0.9581,1.0000);transform-origin:0 0;">$</div>
<div class="t" style="left:1760.50px;top:457.00px;font:normal normal 15px 'Liberation Sans', sans-serif;color:#161c2e;transform:scale(0.9468,1.0000);transform-origin:0 0;">10,000.00</div>
<div class="t" style="left:1153.40px;top:480.00px;font:normal normal 15px 'Liberation Sans', sans-serif;color:#161c2e;">B</div>
<div class="t" style="left:1200.25px;top:480.00px;font:normal normal 15px 'Liberation Sans', sans-serif;color:#161c2e;transform:scale(0.9161,1.0000);transform-origin:0 0;">03 31 10</div>
<div class="t" style="left:1266.20px;top:480.00px;font:normal normal 15px 'Liberation Sans', sans-serif;color:#161c2e;transform:scale(0.9596,1.0000);transform-origin:0 0;">Concrete Footings</div>
<div class="t" style="left:1478.83px;top:480.00px;font:normal normal 15px 'Liberation Sans', sans-serif;color:#161c2e;">1</div>
<div class="t" style="left:1544.70px;top:480.00px;font:normal normal 15px 'Liberation Sans', sans-serif;color:#161c2e;transform:scale(0.8982,1.0000);transform-origin:0 0;">10</div>
<div class="t" style="left:1613.90px;top:480.00px;font:normal normal 15px 'Liberation Sans', sans-serif;color:#161c2e;transform:scale(0.8982,1.0000);transform-origin:0 0;">10</div>
<div class="t" style="left:1684.50px;top:480.00px;font:normal normal 15px 'Liberation Sans', sans-serif;color:#161c2e;transform:scale(0.8982,1.0000);transform-origin:0 0;">10</div>
<div class="t" style="left:1734.00px;top:480.00px;font:normal normal 15px 'Liberation Sans', sans-serif;color:#161c2e;transform:scale(0.9581,1.0000);transform-origin:0 0;">$</div>
<div class="t" style="left:1760.50px;top:480.00px;font:normal normal 15px 'Liberation Sans', sans-serif;color:#161c2e;transform:scale(0.9468,1.0000);transform-origin:0 0;">10,000.00</div>
<div class="t" style="left:1153.40px;top:504.00px;font:normal normal 15px 'Liberation Sans', sans-serif;color:#161c2e;">B</div>
<div class="t" style="left:1200.25px;top:504.00px;font:normal normal 15px 'Liberation Sans', sans-serif;color:#161c2e;transform:scale(0.9161,1.0000);transform-origin:0 0;">03 31 10</div>
<div class="t" style="left:1266.20px;top:504.00px;font:normal normal 15px 'Liberation Sans', sans-serif;color:#161c2e;transform:scale(0.9527,1.0000);transform-origin:0 0;">Concrete Slabs</div>
<div class="t" style="left:1478.83px;top:504.00px;font:normal normal 15px 'Liberation Sans', sans-serif;color:#161c2e;">1</div>
<div class="t" style="left:1544.70px;top:504.00px;font:normal normal 15px 'Liberation Sans', sans-serif;color:#161c2e;transform:scale(0.8982,1.0000);transform-origin:0 0;">10</div>
<div class="t" style="left:1613.90px;top:504.00px;font:normal normal 15px 'Liberation Sans', sans-serif;color:#161c2e;transform:scale(0.8982,1.0000);transform-origin:0 0;">10</div>
<div class="t" style="left:1684.50px;top:504.00px;font:normal normal 15px 'Liberation Sans', sans-serif;color:#161c2e;transform:scale(0.8982,1.0000);transform-origin:0 0;">10</div>
<div class="t" style="left:1734.00px;top:504.00px;font:normal normal 15px 'Liberation Sans', sans-serif;color:#161c2e;transform:scale(0.9581,1.0000);transform-origin:0 0;">$</div>
<div class="t" style="left:1760.50px;top:504.00px;font:normal normal 15px 'Liberation Sans', sans-serif;color:#161c2e;transform:scale(0.9468,1.0000);transform-origin:0 0;">10,000.00</div>
<div class="t" style="left:1153.40px;top:527.00px;font:normal normal 15px 'Liberation Sans', sans-serif;color:#161c2e;">B</div>
<div class="t" style="left:1200.25px;top:527.00px;font:normal normal 15px 'Liberation Sans', sans-serif;color:#161c2e;transform:scale(0.9161,1.0000);transform-origin:0 0;">03 31 20</div>
<div class="t" style="left:1266.20px;top:527.00px;font:normal normal 15px 'Liberation Sans', sans-serif;color:#161c2e;transform:scale(0.9734,1.0000);transform-origin:0 0;">Concrete Columns</div>
<div class="t" style="left:1478.83px;top:527.00px;font:normal normal 15px 'Liberation Sans', sans-serif;color:#161c2e;">1</div>
<div class="t" style="left:1544.70px;top:527.00px;font:normal normal 15px 'Liberation Sans', sans-serif;color:#161c2e;transform:scale(0.8982,1.0000);transform-origin:0 0;">10</div>
<div class="t" style="left:1613.90px;top:527.00px;font:normal normal 15px 'Liberation Sans', sans-serif;color:#161c2e;transform:scale(0.8982,1.0000);transform-origin:0 0;">10</div>
<div class="t" style="left:1684.50px;top:527.00px;font:normal normal 15px 'Liberation Sans', sans-serif;color:#161c2e;transform:scale(0.8982,1.0000);transform-origin:0 0;">10</div>
<div class="t" style="left:1734.00px;top:527.00px;font:normal normal 15px 'Liberation Sans', sans-serif;color:#161c2e;transform:scale(0.9581,1.0000);transform-origin:0 0;">$</div>
<div class="t" style="left:1760.50px;top:527.00px;font:normal normal 15px 'Liberation Sans', sans-serif;color:#161c2e;transform:scale(0.9468,1.0000);transform-origin:0 0;">10,000.00</div>
<div class="t" style="left:1153.40px;top:551.00px;font:normal normal 15px 'Liberation Sans', sans-serif;color:#161c2e;">B</div>
<div class="t" style="left:1200.25px;top:551.00px;font:normal normal 15px 'Liberation Sans', sans-serif;color:#161c2e;transform:scale(0.9161,1.0000);transform-origin:0 0;">03 31 30</div>
<div class="t" style="left:1266.20px;top:551.00px;font:normal normal 15px 'Liberation Sans', sans-serif;color:#161c2e;transform:scale(0.9768,1.0000);transform-origin:0 0;">Concrete Walls</div>
<div class="t" style="left:1478.83px;top:551.00px;font:normal normal 15px 'Liberation Sans', sans-serif;color:#161c2e;">1</div>
<div class="t" style="left:1544.70px;top:551.00px;font:normal normal 15px 'Liberation Sans', sans-serif;color:#161c2e;transform:scale(0.8982,1.0000);transform-origin:0 0;">10</div>
<div class="t" style="left:1613.90px;top:551.00px;font:normal normal 15px 'Liberation Sans', sans-serif;color:#161c2e;transform:scale(0.8982,1.0000);transform-origin:0 0;">10</div>
<div class="t" style="left:1684.50px;top:551.00px;font:normal normal 15px 'Liberation Sans', sans-serif;color:#161c2e;transform:scale(0.8982,1.0000);transform-origin:0 0;">10</div>
<div class="t" style="left:1734.00px;top:551.00px;font:normal normal 15px 'Liberation Sans', sans-serif;color:#161c2e;transform:scale(0.9581,1.0000);transform-origin:0 0;">$</div>
<div class="t" style="left:1760.50px;top:551.00px;font:normal normal 15px 'Liberation Sans', sans-serif;color:#161c2e;transform:scale(0.9468,1.0000);transform-origin:0 0;">10,000.00</div>
<div class="t" style="left:1153.40px;top:574.00px;font:normal normal 15px 'Liberation Sans', sans-serif;color:#161c2e;">B</div>
<div class="t" style="left:1200.25px;top:574.00px;font:normal normal 15px 'Liberation Sans', sans-serif;color:#161c2e;transform:scale(0.9161,1.0000);transform-origin:0 0;">04 21 13</div>
<div class="t" style="left:1266.20px;top:574.00px;font:normal normal 15px 'Liberation Sans', sans-serif;color:#161c2e;transform:scale(0.9433,1.0000);transform-origin:0 0;">Brick Masonry Walls - BV01</div>
<div class="t" style="left:1478.83px;top:574.00px;font:normal normal 15px 'Liberation Sans', sans-serif;color:#161c2e;">1</div>
<div class="t" style="left:1544.70px;top:574.00px;font:normal normal 15px 'Liberation Sans', sans-serif;color:#161c2e;transform:scale(0.8982,1.0000);transform-origin:0 0;">10</div>
<div class="t" style="left:1613.90px;top:574.00px;font:normal normal 15px 'Liberation Sans', sans-serif;color:#161c2e;transform:scale(0.8982,1.0000);transform-origin:0 0;">10</div>
<div class="t" style="left:1684.50px;top:574.00px;font:normal normal 15px 'Liberation Sans', sans-serif;color:#161c2e;transform:scale(0.8982,1.0000);transform-origin:0 0;">10</div>
<div class="t" style="left:1734.00px;top:574.00px;font:normal normal 15px 'Liberation Sans', sans-serif;color:#161c2e;transform:scale(0.9581,1.0000);transform-origin:0 0;">$</div>
<div class="t" style="left:1760.50px;top:574.00px;font:normal normal 15px 'Liberation Sans', sans-serif;color:#161c2e;transform:scale(0.9468,1.0000);transform-origin:0 0;">10,000.00</div>
<div class="t" style="left:1153.40px;top:598.00px;font:normal normal 15px 'Liberation Sans', sans-serif;color:#161c2e;">B</div>
<div class="t" style="left:1200.25px;top:598.00px;font:normal normal 15px 'Liberation Sans', sans-serif;color:#161c2e;transform:scale(0.9161,1.0000);transform-origin:0 0;">04 21 13</div>
<div class="t" style="left:1266.20px;top:598.00px;font:normal normal 15px 'Liberation Sans', sans-serif;color:#161c2e;transform:scale(0.9433,1.0000);transform-origin:0 0;">Brick Masonry Walls - BV02</div>
<div class="t" style="left:1478.83px;top:598.00px;font:normal normal 15px 'Liberation Sans', sans-serif;color:#161c2e;">1</div>
<div class="t" style="left:1544.70px;top:598.00px;font:normal normal 15px 'Liberation Sans', sans-serif;color:#161c2e;transform:scale(0.8982,1.0000);transform-origin:0 0;">10</div>
<div class="t" style="left:1613.90px;top:598.00px;font:normal normal 15px 'Liberation Sans', sans-serif;color:#161c2e;transform:scale(0.8982,1.0000);transform-origin:0 0;">10</div>
<div class="t" style="left:1684.50px;top:598.00px;font:normal normal 15px 'Liberation Sans', sans-serif;color:#161c2e;transform:scale(0.8982,1.0000);transform-origin:0 0;">10</div>
<div class="t" style="left:1734.00px;top:598.00px;font:normal normal 15px 'Liberation Sans', sans-serif;color:#161c2e;transform:scale(0.9581,1.0000);transform-origin:0 0;">$</div>
<div class="t" style="left:1760.50px;top:598.00px;font:normal normal 15px 'Liberation Sans', sans-serif;color:#161c2e;transform:scale(0.9468,1.0000);transform-origin:0 0;">10,000.00</div>
<div class="t" style="left:1153.40px;top:621.00px;font:normal normal 15px 'Liberation Sans', sans-serif;color:#161c2e;">B</div>
<div class="t" style="left:1200.25px;top:621.00px;font:normal normal 15px 'Liberation Sans', sans-serif;color:#161c2e;transform:scale(0.9161,1.0000);transform-origin:0 0;">05 41 00</div>
<div class="t" style="left:1266.20px;top:621.00px;font:normal normal 15px 'Liberation Sans', sans-serif;color:#161c2e;transform:scale(0.9557,1.0000);transform-origin:0 0;">Metal Stud Framing</div>
<div class="t" style="left:1478.83px;top:621.00px;font:normal normal 15px 'Liberation Sans', sans-serif;color:#161c2e;">1</div>
<div class="t" style="left:1544.70px;top:621.00px;font:normal normal 15px 'Liberation Sans', sans-serif;color:#161c2e;transform:scale(0.8982,1.0000);transform-origin:0 0;">10</div>
<div class="t" style="left:1613.90px;top:621.00px;font:normal normal 15px 'Liberation Sans', sans-serif;color:#161c2e;transform:scale(0.8982,1.0000);transform-origin:0 0;">10</div>
<div class="t" style="left:1684.50px;top:621.00px;font:normal normal 15px 'Liberation Sans', sans-serif;color:#161c2e;transform:scale(0.8982,1.0000);transform-origin:0 0;">10</div>
<div class="t" style="left:1734.00px;top:621.00px;font:normal normal 15px 'Liberation Sans', sans-serif;color:#161c2e;transform:scale(0.9581,1.0000);transform-origin:0 0;">$</div>
<div class="t" style="left:1760.50px;top:621.00px;font:normal normal 15px 'Liberation Sans', sans-serif;color:#161c2e;transform:scale(0.9468,1.0000);transform-origin:0 0;">10,000.00</div>
<div class="t" style="left:1153.40px;top:645.00px;font:normal normal 15px 'Liberation Sans', sans-serif;color:#161c2e;">B</div>
<div class="t" style="left:1200.25px;top:645.00px;font:normal normal 15px 'Liberation Sans', sans-serif;color:#161c2e;transform:scale(0.9161,1.0000);transform-origin:0 0;">03 31 10</div>
<div class="t" style="left:1266.20px;top:645.00px;font:normal normal 15px 'Liberation Sans', sans-serif;color:#161c2e;transform:scale(0.9596,1.0000);transform-origin:0 0;">Concrete Footings</div>
<div class="t" style="left:1478.83px;top:645.00px;font:normal normal 15px 'Liberation Sans', sans-serif;color:#161c2e;">1</div>
<div class="t" style="left:1544.70px;top:645.00px;font:normal normal 15px 'Liberation Sans', sans-serif;color:#161c2e;transform:scale(0.8982,1.0000);transform-origin:0 0;">10</div>
<div class="t" style="left:1613.90px;top:645.00px;font:normal normal 15px 'Liberation Sans', sans-serif;color:#161c2e;transform:scale(0.8982,1.0000);transform-origin:0 0;">10</div>
<div class="t" style="left:1684.50px;top:645.00px;font:normal normal 15px 'Liberation Sans', sans-serif;color:#161c2e;transform:scale(0.8982,1.0000);transform-origin:0 0;">10</div>
<div class="t" style="left:1734.00px;top:645.00px;font:normal normal 15px 'Liberation Sans', sans-serif;color:#161c2e;transform:scale(0.9581,1.0000);transform-origin:0 0;">$</div>
<div class="t" style="left:1760.50px;top:645.00px;font:normal normal 15px 'Liberation Sans', sans-serif;color:#161c2e;transform:scale(0.9468,1.0000);transform-origin:0 0;">10,000.00</div>
<div class="t" style="left:1153.40px;top:668.00px;font:normal normal 15px 'Liberation Sans', sans-serif;color:#161c2e;">B</div>
<div class="t" style="left:1200.25px;top:668.00px;font:normal normal 15px 'Liberation Sans', sans-serif;color:#161c2e;transform:scale(0.9161,1.0000);transform-origin:0 0;">03 31 10</div>
<div class="t" style="left:1266.20px;top:668.00px;font:normal normal 15px 'Liberation Sans', sans-serif;color:#161c2e;transform:scale(0.9527,1.0000);transform-origin:0 0;">Concrete Slabs</div>
<div class="t" style="left:1478.83px;top:668.00px;font:normal normal 15px 'Liberation Sans', sans-serif;color:#161c2e;">1</div>
<div class="t" style="left:1544.70px;top:668.00px;font:normal normal 15px 'Liberation Sans', sans-serif;color:#161c2e;transform:scale(0.8982,1.0000);transform-origin:0 0;">10</div>
<div class="t" style="left:1613.90px;top:668.00px;font:normal normal 15px 'Liberation Sans', sans-serif;color:#161c2e;transform:scale(0.8982,1.0000);transform-origin:0 0;">10</div>
<div class="t" style="left:1684.50px;top:668.00px;font:normal normal 15px 'Liberation Sans', sans-serif;color:#161c2e;transform:scale(0.8982,1.0000);transform-origin:0 0;">10</div>
<div class="t" style="left:1734.00px;top:668.00px;font:normal normal 15px 'Liberation Sans', sans-serif;color:#161c2e;transform:scale(0.9581,1.0000);transform-origin:0 0;">$</div>
<div class="t" style="left:1760.50px;top:668.00px;font:normal normal 15px 'Liberation Sans', sans-serif;color:#161c2e;transform:scale(0.9468,1.0000);transform-origin:0 0;">10,000.00</div>
<div class="t" style="left:1153.40px;top:692.00px;font:normal normal 15px 'Liberation Sans', sans-serif;color:#161c2e;">B</div>
<div class="t" style="left:1200.25px;top:692.00px;font:normal normal 15px 'Liberation Sans', sans-serif;color:#161c2e;transform:scale(0.9161,1.0000);transform-origin:0 0;">03 31 20</div>
<div class="t" style="left:1266.20px;top:692.00px;font:normal normal 15px 'Liberation Sans', sans-serif;color:#161c2e;transform:scale(0.9734,1.0000);transform-origin:0 0;">Concrete Columns</div>
<div class="t" style="left:1478.83px;top:692.00px;font:normal normal 15px 'Liberation Sans', sans-serif;color:#161c2e;">1</div>
<div class="t" style="left:1544.70px;top:692.00px;font:normal normal 15px 'Liberation Sans', sans-serif;color:#161c2e;transform:scale(0.8982,1.0000);transform-origin:0 0;">10</div>
<div class="t" style="left:1613.90px;top:692.00px;font:normal normal 15px 'Liberation Sans', sans-serif;color:#161c2e;transform:scale(0.8982,1.0000);transform-origin:0 0;">10</div>
<div class="t" style="left:1684.50px;top:692.00px;font:normal normal 15px 'Liberation Sans', sans-serif;color:#161c2e;transform:scale(0.8982,1.0000);transform-origin:0 0;">10</div>
<div class="t" style="left:1734.00px;top:692.00px;font:normal normal 15px 'Liberation Sans', sans-serif;color:#161c2e;transform:scale(0.9581,1.0000);transform-origin:0 0;">$</div>
<div class="t" style="left:1760.50px;top:692.00px;font:normal normal 15px 'Liberation Sans', sans-serif;color:#161c2e;transform:scale(0.9468,1.0000);transform-origin:0 0;">10,000.00</div>
<div class="t" style="left:1153.40px;top:713.00px;font:normal normal 15px 'Liberation Sans', sans-serif;color:#161c2e;">B</div>
<div class="t" style="left:1200.25px;top:713.00px;font:normal normal 15px 'Liberation Sans', sans-serif;color:#161c2e;transform:scale(0.9161,1.0000);transform-origin:0 0;">03 31 20</div>
<div class="t" style="left:1266.20px;top:713.00px;font:normal normal 15px 'Liberation Sans', sans-serif;color:#161c2e;transform:scale(0.9734,1.0000);transform-origin:0 0;">Concrete Columns</div>
<div class="t" style="left:1478.83px;top:713.00px;font:normal normal 15px 'Liberation Sans', sans-serif;color:#161c2e;">1</div>
<div class="t" style="left:1544.70px;top:713.00px;font:normal normal 15px 'Liberation Sans', sans-serif;color:#161c2e;transform:scale(0.8982,1.0000);transform-origin:0 0;">10</div>
<div class="t" style="left:1613.90px;top:713.00px;font:normal normal 15px 'Liberation Sans', sans-serif;color:#161c2e;transform:scale(0.8982,1.0000);transform-origin:0 0;">10</div>
<div class="t" style="left:1684.50px;top:713.00px;font:normal normal 15px 'Liberation Sans', sans-serif;color:#161c2e;transform:scale(0.8982,1.0000);transform-origin:0 0;">10</div>
<div class="t" style="left:1734.00px;top:713.00px;font:normal normal 15px 'Liberation Sans', sans-serif;color:#161c2e;transform:scale(0.9581,1.0000);transform-origin:0 0;">$</div>
<div class="t" style="left:1760.50px;top:713.00px;font:normal normal 15px 'Liberation Sans', sans-serif;color:#161c2e;transform:scale(0.9468,1.0000);transform-origin:0 0;">10,000.00</div>
<div class="t" style="left:1153.40px;top:734.00px;font:normal normal 15px 'Liberation Sans', sans-serif;color:#161c2e;">B</div>
<div class="t" style="left:1200.25px;top:734.00px;font:normal normal 15px 'Liberation Sans', sans-serif;color:#161c2e;transform:scale(0.9161,1.0000);transform-origin:0 0;">04 21 13</div>
<div class="t" style="left:1266.20px;top:734.00px;font:normal normal 15px 'Liberation Sans', sans-serif;color:#161c2e;transform:scale(0.9433,1.0000);transform-origin:0 0;">Brick Masonry Walls - BV01</div>
<div class="t" style="left:1478.83px;top:734.00px;font:normal normal 15px 'Liberation Sans', sans-serif;color:#161c2e;">1</div>
<div class="t" style="left:1544.70px;top:734.00px;font:normal normal 15px 'Liberation Sans', sans-serif;color:#161c2e;transform:scale(0.8982,1.0000);transform-origin:0 0;">10</div>
<div class="t" style="left:1613.90px;top:734.00px;font:normal normal 15px 'Liberation Sans', sans-serif;color:#161c2e;transform:scale(0.8982,1.0000);transform-origin:0 0;">10</div>
<div class="t" style="left:1684.50px;top:734.00px;font:normal normal 15px 'Liberation Sans', sans-serif;color:#161c2e;transform:scale(0.8982,1.0000);transform-origin:0 0;">10</div>
<div class="t" style="left:1734.00px;top:734.00px;font:normal normal 15px 'Liberation Sans', sans-serif;color:#161c2e;transform:scale(0.9581,1.0000);transform-origin:0 0;">$</div>
<div class="t" style="left:1760.50px;top:734.00px;font:normal normal 15px 'Liberation Sans', sans-serif;color:#161c2e;transform:scale(0.9468,1.0000);transform-origin:0 0;">10,000.00</div>
<div class="t" style="left:1153.40px;top:755.00px;font:normal normal 15px 'Liberation Sans', sans-serif;color:#161c2e;">B</div>
<div class="t" style="left:1200.25px;top:755.00px;font:normal normal 15px 'Liberation Sans', sans-serif;color:#161c2e;transform:scale(0.9161,1.0000);transform-origin:0 0;">04 21 13</div>
<div class="t" style="left:1266.20px;top:755.00px;font:normal normal 15px 'Liberation Sans', sans-serif;color:#161c2e;transform:scale(0.9433,1.0000);transform-origin:0 0;">Brick Masonry Walls - BV02</div>
<div class="t" style="left:1478.83px;top:755.00px;font:normal normal 15px 'Liberation Sans', sans-serif;color:#161c2e;">1</div>
<div class="t" style="left:1544.70px;top:755.00px;font:normal normal 15px 'Liberation Sans', sans-serif;color:#161c2e;transform:scale(0.8982,1.0000);transform-origin:0 0;">10</div>
<div class="t" style="left:1613.90px;top:755.00px;font:normal normal 15px 'Liberation Sans', sans-serif;color:#161c2e;transform:scale(0.8982,1.0000);transform-origin:0 0;">10</div>
<div class="t" style="left:1684.50px;top:755.00px;font:normal normal 15px 'Liberation Sans', sans-serif;color:#161c2e;transform:scale(0.8982,1.0000);transform-origin:0 0;">10</div>
<div class="t" style="left:1734.00px;top:755.00px;font:normal normal 15px 'Liberation Sans', sans-serif;color:#161c2e;transform:scale(0.9581,1.0000);transform-origin:0 0;">$</div>
<div class="t" style="left:1760.50px;top:755.00px;font:normal normal 15px 'Liberation Sans', sans-serif;color:#161c2e;transform:scale(0.9468,1.0000);transform-origin:0 0;">10,000.00</div>
<div class="t" style="left:1153.40px;top:776.00px;font:normal normal 15px 'Liberation Sans', sans-serif;color:#161c2e;">B</div>
<div class="t" style="left:1200.25px;top:776.00px;font:normal normal 15px 'Liberation Sans', sans-serif;color:#161c2e;transform:scale(0.9161,1.0000);transform-origin:0 0;">05 41 00</div>
<div class="t" style="left:1266.20px;top:776.00px;font:normal normal 15px 'Liberation Sans', sans-serif;color:#161c2e;transform:scale(0.9557,1.0000);transform-origin:0 0;">Metal Stud Framing</div>
<div class="t" style="left:1478.83px;top:776.00px;font:normal normal 15px 'Liberation Sans', sans-serif;color:#161c2e;">1</div>
<div class="t" style="left:1544.70px;top:776.00px;font:normal normal 15px 'Liberation Sans', sans-serif;color:#161c2e;transform:scale(0.8982,1.0000);transform-origin:0 0;">10</div>
<div class="t" style="left:1613.90px;top:776.00px;font:normal normal 15px 'Liberation Sans', sans-serif;color:#161c2e;transform:scale(0.8982,1.0000);transform-origin:0 0;">10</div>
<div class="t" style="left:1684.50px;top:776.00px;font:normal normal 15px 'Liberation Sans', sans-serif;color:#161c2e;transform:scale(0.8982,1.0000);transform-origin:0 0;">10</div>
<div class="t" style="left:1734.00px;top:776.00px;font:normal normal 15px 'Liberation Sans', sans-serif;color:#161c2e;transform:scale(0.9581,1.0000);transform-origin:0 0;">$</div>
<div class="t" style="left:1760.50px;top:776.00px;font:normal normal 15px 'Liberation Sans', sans-serif;color:#161c2e;transform:scale(0.9468,1.0000);transform-origin:0 0;">10,000.00</div>
<div class="t" style="left:1153.40px;top:797.00px;font:normal normal 15px 'Liberation Sans', sans-serif;color:#161c2e;">B</div>
<div class="t" style="left:1200.25px;top:797.00px;font:normal normal 15px 'Liberation Sans', sans-serif;color:#161c2e;transform:scale(0.9161,1.0000);transform-origin:0 0;">03 31 10</div>
<div class="t" style="left:1266.20px;top:797.00px;font:normal normal 15px 'Liberation Sans', sans-serif;color:#161c2e;transform:scale(0.9527,1.0000);transform-origin:0 0;">Concrete Slabs</div>
<div class="t" style="left:1478.83px;top:797.00px;font:normal normal 15px 'Liberation Sans', sans-serif;color:#161c2e;">1</div>
<div class="t" style="left:1544.70px;top:797.00px;font:normal normal 15px 'Liberation Sans', sans-serif;color:#161c2e;transform:scale(0.8982,1.0000);transform-origin:0 0;">10</div>
<div class="t" style="left:1613.90px;top:797.00px;font:normal normal 15px 'Liberation Sans', sans-serif;color:#161c2e;transform:scale(0.8982,1.0000);transform-origin:0 0;">10</div>
<div class="t" style="left:1684.50px;top:797.00px;font:normal normal 15px 'Liberation Sans', sans-serif;color:#161c2e;transform:scale(0.8982,1.0000);transform-origin:0 0;">10</div>
<div class="t" style="left:1734.00px;top:797.00px;font:normal normal 15px 'Liberation Sans', sans-serif;color:#161c2e;transform:scale(0.9581,1.0000);transform-origin:0 0;">$</div>
<div class="t" style="left:1760.50px;top:797.00px;font:normal normal 15px 'Liberation Sans', sans-serif;color:#161c2e;transform:scale(0.9468,1.0000);transform-origin:0 0;">10,000.00</div>
<div class="t" style="left:1153.40px;top:816.00px;font:normal normal 15px 'Liberation Sans', sans-serif;color:#161c2e;">B</div>
<div class="t" style="left:1200.25px;top:816.00px;font:normal normal 15px 'Liberation Sans', sans-serif;color:#161c2e;transform:scale(0.9161,1.0000);transform-origin:0 0;">03 31 20</div>
<div class="t" style="left:1266.20px;top:816.00px;font:normal normal 15px 'Liberation Sans', sans-serif;color:#161c2e;transform:scale(0.9734,1.0000);transform-origin:0 0;">Concrete Columns</div>
<div class="t" style="left:1478.83px;top:816.00px;font:normal normal 15px 'Liberation Sans', sans-serif;color:#161c2e;">1</div>
<div class="t" style="left:1544.70px;top:816.00px;font:normal normal 15px 'Liberation Sans', sans-serif;color:#161c2e;transform:scale(0.8982,1.0000);transform-origin:0 0;">10</div>
<div class="t" style="left:1613.90px;top:816.00px;font:normal normal 15px 'Liberation Sans', sans-serif;color:#161c2e;transform:scale(0.8982,1.0000);transform-origin:0 0;">10</div>
<div class="t" style="left:1684.50px;top:816.00px;font:normal normal 15px 'Liberation Sans', sans-serif;color:#161c2e;transform:scale(0.8982,1.0000);transform-origin:0 0;">10</div>
<div class="t" style="left:1734.00px;top:816.00px;font:normal normal 15px 'Liberation Sans', sans-serif;color:#161c2e;transform:scale(0.9581,1.0000);transform-origin:0 0;">$</div>
<div class="t" style="left:1760.50px;top:816.00px;font:normal normal 15px 'Liberation Sans', sans-serif;color:#161c2e;transform:scale(0.9468,1.0000);transform-origin:0 0;">10,000.00</div>
<div style="position:absolute;left:1124px;top:192px;width:709px;height:2px;background:#7a4db6"></div>
<div style="position:absolute;left:1124px;top:837px;width:709px;height:2px;background:#7a4db6"></div>
<div style="position:absolute;left:1124px;top:192px;width:2px;height:647px;background:#7a4db6"></div>
<div style="position:absolute;left:1831px;top:192px;width:2px;height:647px;background:#7a4db6"></div>
<div style="position:absolute;left:1189px;top:192px;width:2px;height:647px;background:#3366c9"></div>
<div style="position:absolute;left:1262px;top:192px;width:2px;height:647px;background:#3366c9"></div>
<div style="position:absolute;left:1262px;top:192px;width:2px;height:647px;background:#c22a3e"></div>
<div style="position:absolute;left:1446px;top:192px;width:2px;height:647px;background:#c22a3e"></div>
<div style="position:absolute;left:1124px;top:160px;width:709px;height:2px;background:#ae307f"></div>
<div style="position:absolute;left:1124px;top:192px;width:709px;height:2px;background:#ae307f"></div>
<div style="position:absolute;left:1124px;top:160px;width:2px;height:34px;background:#ae307f"></div>
<div style="position:absolute;left:1831px;top:160px;width:2px;height:34px;background:#ae307f"></div>
<div style="position:absolute;left:1122px;top:835px;width:6px;height:6px;box-sizing:border-box;background:#7a4db6;outline:1px solid #fff"></div>
<div style="position:absolute;left:1829px;top:835px;width:6px;height:6px;box-sizing:border-box;background:#7a4db6;outline:1px solid #fff"></div>
<div style="position:absolute;left:1187px;top:835px;width:6px;height:6px;box-sizing:border-box;background:#3366c9;outline:1px solid #fff"></div>
<div style="position:absolute;left:1260px;top:835px;width:6px;height:6px;box-sizing:border-box;background:#c22a3e;outline:1px solid #fff"></div>
<div style="position:absolute;left:1444px;top:835px;width:6px;height:6px;box-sizing:border-box;background:#c22a3e;outline:1px solid #fff"></div>
<div style="position:absolute;left:1122px;top:158px;width:6px;height:6px;box-sizing:border-box;background:#ae307f;outline:1px solid #fff"></div>
<div style="position:absolute;left:1829px;top:158px;width:6px;height:6px;box-sizing:border-box;background:#ae307f;outline:1px solid #fff"></div>
<div style="position:absolute;left:1122px;top:190px;width:6px;height:6px;box-sizing:border-box;background:#ae307f;outline:1px solid #fff"></div>
<div style="position:absolute;left:1829px;top:190px;width:6px;height:6px;box-sizing:border-box;background:#ae307f;outline:1px solid #fff"></div>
<div style="position:absolute;left:1187px;top:190px;width:6px;height:6px;box-sizing:border-box;background:#3366c9;outline:1px solid #fff"></div>
<div style="position:absolute;left:1260px;top:190px;width:6px;height:6px;box-sizing:border-box;background:#c22a3e;outline:1px solid #fff"></div>
<div style="position:absolute;left:1444px;top:190px;width:6px;height:6px;box-sizing:border-box;background:#c22a3e;outline:1px solid #fff"></div>
<div style="position:absolute;left:305px;top:101px;width:333px;height:18px;box-sizing:border-box;background:#fff;border:1px solid #c6c6c6;box-shadow:0 2px 3px rgba(0,0,0,0.18)"></div>
<div class="t" style="left:311.30px;top:102.00px;font:normal normal 12.5px 'Liberation Sans', sans-serif;color:#454545;transform:scale(0.9095,1.0000);transform-origin:0 0;">SUMPRODUCT(array1, [array2], <b style="color:#333">[array3]</b>, [array4], [array5], ...)</div>
</body></html>
